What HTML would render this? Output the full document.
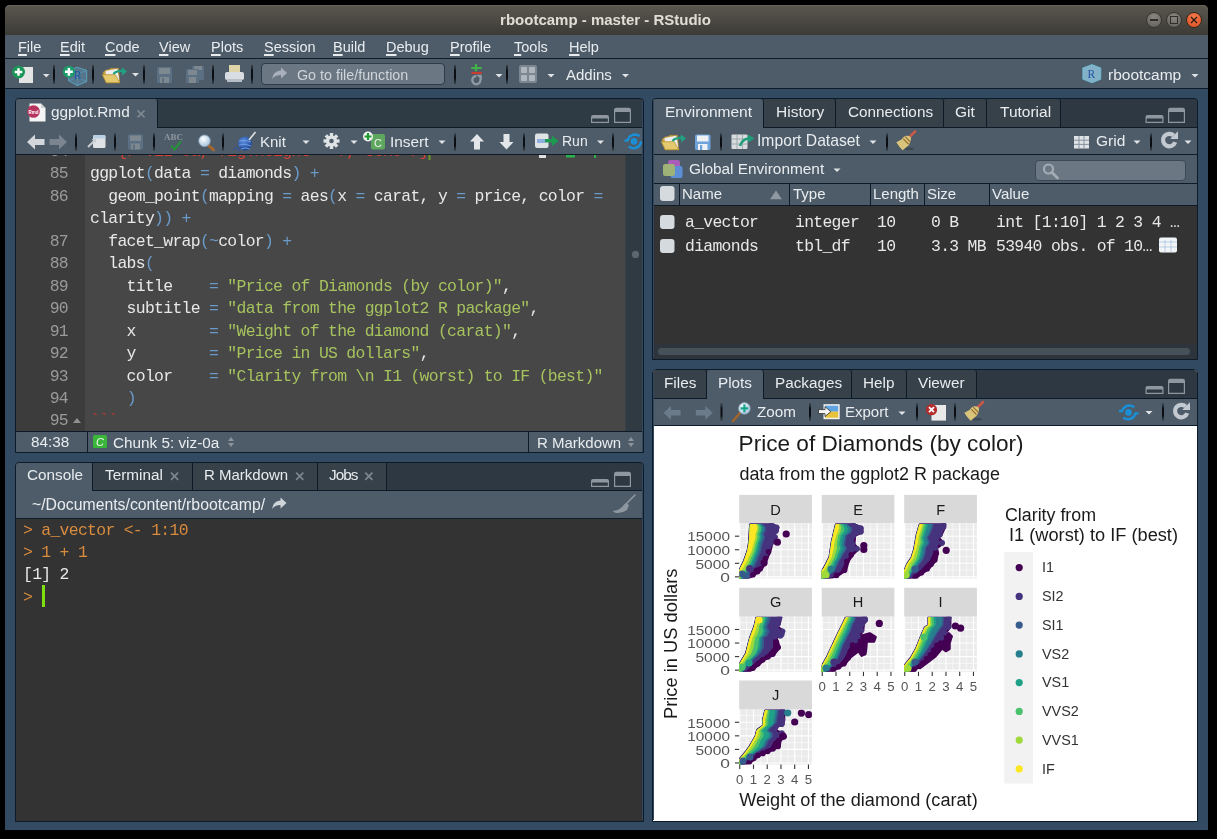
<!DOCTYPE html>
<html><head><meta charset="utf-8">
<style>
*{margin:0;padding:0;box-sizing:border-box}
html,body{width:1217px;height:839px;background:#000;overflow:hidden;font-family:"Liberation Sans",sans-serif;font-size:14px;color:#e4e8ec}
.a{position:absolute}
svg{will-change:transform}
.mono{font-family:"Liberation Mono",monospace}
#win{left:5px;top:5px;width:1203px;height:825px;background:#324b62;border-radius:5px 5px 0 0;overflow:hidden}
#title{left:5px;top:5px;width:1203px;height:30px;border-radius:5px 5px 0 0;box-shadow:inset 0 1px #67655b;background:linear-gradient(#5a574f,#3c3b36)}
#title .t{will-change:transform;left:-1px;top:6px;width:1203px;text-align:center;font-weight:bold;font-size:15px;color:#e0ddd5}
#menu{left:5px;top:35px;width:1203px;height:24px;background:#4e5c69;border-bottom:1px solid #0e1c29}
#menu span{position:absolute;will-change:transform;top:4px;font-size:14.5px;color:#e8ecef}
#menu u{text-decoration:underline;text-decoration-thickness:1.5px;text-underline-offset:2px}
#tool{left:5px;top:59px;width:1203px;height:30px;background:#4e5c69;border-bottom:1px solid #0e1c29}
.pane{position:absolute;border:1px solid #0d1a27;border-radius:4px 4px 0 0;overflow:hidden}
.tabbar{position:absolute;left:0;top:0;right:0;height:29px;background:#2e3a44;border-bottom:1px solid #0d1a27}
.tab{position:absolute;top:0;height:29px;background:#3a4651;border-right:1px solid #0d1a27;border-bottom:1px solid #0d1a27;color:#e6eaee;font-size:14.5px;line-height:28px}
.tab.act{background:#4e5c69;border-bottom:1px solid #4e5c69;border-radius:4px 4px 0 0}
.bar{position:absolute;left:0;right:0;background:#4e5c69;border-bottom:1px solid #0d1a27}
.sep{position:absolute;width:2px;height:19px;background:#151d24;border-radius:1px}
.lbl{position:absolute;font-size:14.5px;color:#e8ecef;white-space:nowrap;margin-top:-1px;will-change:transform}
.code{position:absolute;will-change:transform;font-family:"Liberation Mono",monospace;font-size:16.4px;letter-spacing:-0.68px;white-space:pre;color:#e8e8e8;line-height:22.45px}
.p{color:#6a9ac8}
.s{color:#a6c35e}
.ln{position:absolute;will-change:transform;font-family:"Liberation Mono",monospace;font-size:16.4px;letter-spacing:-0.68px;color:#9a9a9a;line-height:22.45px;text-align:right;white-space:pre}
.cb{position:absolute;width:14px;height:14px;border-radius:3px;background:#d7dce0}
</style></head><body>
<div id="win" class="a"></div>
<div id="title" class="a"><div class="t a">rbootcamp - master - RStudio</div>
  <div class="a" style="left:1141px;top:7px;width:16px;height:16px;border-radius:50%;background:radial-gradient(circle at 50% 30%,#8a8780,#5e5c56);border:1px solid #36352f"></div>
  <div class="a" style="left:1145px;top:14px;width:8px;height:1.5px;background:#2f2e2a"></div>
  <div class="a" style="left:1161px;top:7px;width:16px;height:16px;border-radius:50%;background:radial-gradient(circle at 50% 30%,#8a8780,#5e5c56);border:1px solid #36352f"></div>
  <div class="a" style="left:1165px;top:11px;width:8px;height:8px;border:1.3px solid #2f2e2a"></div>
  <div class="a" style="left:1181px;top:7px;width:16px;height:16px;border-radius:50%;background:radial-gradient(circle at 50% 30%,#f27a4e,#dd4e1f);border:1px solid #3a2a20"></div>
  <svg class="a" style="left:1181px;top:7px" width="16" height="16"><path d="M5 5 L11 11 M11 5 L5 11" stroke="#2a1a10" stroke-width="1.3"/></svg>
</div>
<div id="menu" class="a">
    <span style="left:13px"><u>F</u>ile</span>
    <span style="left:55px"><u>E</u>dit</span>
    <span style="left:100px"><u>C</u>ode</span>
    <span style="left:154px"><u>V</u>iew</span>
    <span style="left:206px"><u>P</u>lots</span>
    <span style="left:259px"><u>S</u>ession</span>
    <span style="left:328px"><u>B</u>uild</span>
    <span style="left:381px"><u>D</u>ebug</span>
    <span style="left:445px"><u>P</u>rofile</span>
    <span style="left:509px"><u>T</u>ools</span>
    <span style="left:564px"><u>H</u>elp</span>
</div>
<div id="tool" class="a"></div>
<!-- TOOLBAR ICONS -->
<div id="tb">
  <svg class="a" style="left:0;top:58px" width="1217" height="31">
    <defs>
      <linearGradient id="sepg" x1="0" y1="0" x2="0" y2="1"><stop offset="0" stop-color="#0b0f13" stop-opacity="0.3"/><stop offset="0.3" stop-color="#0b0f13"/><stop offset="0.7" stop-color="#0b0f13"/><stop offset="1" stop-color="#0b0f13" stop-opacity="0.3"/></linearGradient>
    </defs>
    <!-- new file -->
    <rect x="19" y="9" width="14" height="16" fill="#e4e4e4"/>
    <circle cx="18.5" cy="14" r="6.5" fill="#1a9457"/>
    <path d="M18.5 10.2 V17.8 M14.7 14 H22.3" stroke="#fff" stroke-width="2.4"/>
    <path d="M43 16 h6.5 l-3.25 3.5z" fill="#dfe3e6"/>
    <rect x="53" y="7" width="2" height="19" fill="url(#sepg)"/>
    <!-- new project cube -->
    <path d="M77.3 9.2 L86.7 12.4 L86.7 23.6 L77.3 27.6 L68.6 22.7 L68.6 12.6 Z" fill="#5a88a6" fill-opacity="0.6" stroke="#5cb6d6" stroke-width="0.9" stroke-opacity="0.8"/>
    <path d="M68.6 12.6 L77.3 16 L86.7 12.4 M77.3 16 V27.6 M68.6 22.7 L77.3 19.5 L86.7 23.6" stroke="#5cb6d6" stroke-width="0.7" fill="none" opacity="0.55"/>
    <text x="73.8" y="20.8" font-family="Liberation Serif" font-size="11.5" fill="#2454a0">R</text>
    <circle cx="68.9" cy="13.8" r="6" fill="#1a9e69"/>
    <path d="M68.9 9.9 V17.7 M65 13.8 H72.8" stroke="#fff" stroke-width="2.5"/>
    <rect x="92" y="7" width="2" height="19" fill="url(#sepg)"/>
    <!-- open folder -->
    <path d="M103 14.5 L105.5 12.3 L109.5 11.3 L111 10.3 L118.5 10.3 L119.7 24.7 L106 24.7 Z" fill="#c9a44a" stroke="#b08d35" stroke-width="0.6"/>
    <path d="M105.6 12.9 L117.3 10.8 L119.3 22.5 L106.2 22.7 Z" fill="#ededed"/>
    <path d="M102.3 16.7 L115.2 16.7 L119.8 24.7 L106.3 24.7 Z" fill="#e4c96f" stroke="#b8962e" stroke-width="0.8"/>
    <path d="M113.5 16 Q116 12.6 122.3 12.9" stroke="#22a180" stroke-width="2.4" fill="none"/>
    <path d="M121.8 9.2 L127 13.4 L122.1 17.5 Z" fill="#22a180"/>
    <path d="M132 15 h7 l-3.5 3.5z" fill="#dfe3e6"/>
    <rect x="143" y="7" width="2" height="19" fill="url(#sepg)"/>
    <!-- save disabled -->
    <rect x="157" y="9" width="15" height="16" rx="1.5" fill="#5c7083"/>
    <rect x="159" y="10" width="11" height="6" fill="#7d8891"/>
    <rect x="160" y="19" width="9" height="6" fill="#7d8891"/>
    <rect x="162" y="20" width="2" height="5" fill="#5c7083"/>
    <!-- save all disabled -->
    <rect x="192" y="8" width="12" height="14" rx="1.5" fill="#5c7083"/>
    <rect x="194" y="8" width="8" height="4" fill="#7d8891"/>
    <rect x="186" y="11" width="13" height="14" rx="1.5" fill="#5c7083"/>
    <rect x="188" y="12" width="9" height="5" fill="#7d8891"/>
    <rect x="189" y="19" width="7" height="6" fill="#7d8891"/>
    <rect x="212" y="7" width="2" height="19" fill="url(#sepg)"/>
    <!-- printer -->
    <rect x="229" y="7" width="11" height="9" fill="#e0d5a8"/>
    <rect x="225" y="14" width="19" height="8" rx="2" fill="#d9dde2"/>
    <rect x="227" y="21" width="15" height="3" fill="#b8bec5"/>
    <rect x="251" y="7" width="2" height="19" fill="url(#sepg)"/>
    <!-- goto box -->
    <rect x="261.5" y="5.5" width="183" height="21" rx="3.5" fill="#6b7884" stroke="#2e3a45" stroke-width="1"/>
    <path d="M272 21 Q273 13 281 12.5 V9.5 L287 15 L281 20.5 V17 Q275 17 272 21Z" fill="#a9b0bb"/>
    <rect x="454" y="7" width="2" height="19" fill="url(#sepg)"/>
    <!-- vcs icon -->
    <path d="M476 5.9 V13.2 M471.3 10 H481.8" stroke="#3fb548" stroke-width="2.1"/>
    <rect x="471.5" y="13.9" width="10.3" height="2.1" fill="#cc3b30"/>
    <path d="M476.4 18 A4.1 4.1 0 1 0 480.25 20.7" stroke="#8e99a4" stroke-width="2.4" fill="none"/>
    <path d="M476.2 16.8 L481.8 16.8 L481.8 22.2Z" fill="#8e99a4"/>
    <path d="M495.5 16 h7 l-3.5 3.5z" fill="#dfe3e6"/>
    <rect x="506" y="7" width="2" height="19" fill="url(#sepg)"/>
    <!-- grid panes -->
    <rect x="519" y="7" width="18" height="18" rx="2" fill="#7d8791"/>
    <rect x="521" y="9" width="6" height="6" rx="1" fill="#aeb5bc"/>
    <rect x="529" y="9" width="6" height="6" rx="1" fill="#aeb5bc"/>
    <rect x="521" y="17" width="6" height="6" rx="1" fill="#aeb5bc"/>
    <rect x="529" y="17" width="6" height="6" rx="1" fill="#aeb5bc"/>
    <path d="M547.5 16 h7 l-3.5 3.5z" fill="#dfe3e6"/>
    <path d="M622 16 h7 l-3.5 3.5z" fill="#dfe3e6"/>
    <!-- project cube -->
    <path d="M1092 6.6 L1100.8 10 L1100.8 21.2 L1092 24.8 L1082.8 21.2 L1082.8 10 Z" fill="#8fc0d8" fill-opacity="0.85" stroke="#6fc0dc" stroke-width="0.8"/>
    <path d="M1082.8 10 L1092 13.5 L1100.8 10 M1092 13.5 V24.8 M1082.8 21.2 L1092 17.5 L1100.8 21.2" stroke="#6fb8d4" stroke-width="0.6" fill="none" opacity="0.6"/>
    <text x="1087.5" y="19.8" font-family="Liberation Serif" font-size="11.5" fill="#2454a0">R</text>
    <path d="M1191.5 16 h7 l-3.5 3.5z" fill="#dfe3e6"/>
  </svg>
  <div class="lbl" style="left:297px;top:68px;font-size:14.3px;color:#cfd4d9">Go to file/function</div>
  <div class="lbl" style="left:566px;top:67px;font-size:15px">Addins</div>
  <div class="lbl" style="left:1108px;top:67px;font-size:15.5px">rbootcamp</div>
</div>

<!-- EDITOR PANE -->
<div class="pane" style="left:15px;top:98px;width:629px;height:355px;background:#474747"></div>
<div class="a" style="left:16px;top:99px;width:627px;height:29px;background:#2e3a44;border-bottom:1px solid #0d1a27;border-radius:3px 3px 0 0"></div>
<div class="a" style="left:16px;top:99px;width:142px;height:29px;background:#4e5c69;border-right:1px solid #0d1a27;border-radius:3px 3px 0 0"></div>
<div class="a" style="left:16px;top:128px;width:627px;height:27px;background:#4e5c69;border-bottom:1px solid #0d1a27"></div>
<div class="a" style="left:16px;top:155px;width:69px;height:276px;background:#3c3c3c"></div>
<div class="a" style="left:625px;top:155px;width:18px;height:276px;background:#303a43"></div>
<div class="a" style="left:16px;top:431px;width:627px;height:22px;background:#4e5c69;border-top:1px solid #0d1a27;border-bottom:1px solid #0d1a27"></div>
<div class="a" style="left:87px;top:432px;width:1px;height:20px;background:#0d1a27"></div>
<div class="a" style="left:528px;top:432px;width:1px;height:20px;background:#0d1a27"></div>
<div class="lbl" style="left:51px;top:104px;font-size:15.4px">ggplot.Rmd</div>
<div class="lbl" style="left:260px;top:134px;font-size:15px">Knit</div>
<div class="lbl" style="left:390px;top:134px;font-size:15.4px">Insert</div>
<div class="lbl" style="left:562px;top:134px;font-size:14px">Run</div>
<div class="lbl" style="left:31px;top:434px;font-size:15.3px">84:38</div>
<div class="lbl" style="left:113px;top:435px;font-size:15.3px">Chunk 5: viz-0a</div>
<div class="lbl" style="left:537px;top:435px;font-size:15px">R Markdown</div>
<div id="edcode" class="a" style="left:16px;top:155px;width:609px;height:276px;overflow:hidden">
<div class="ln" style="left:0;top:-14px;width:52px">84
85
86

87
88
89
90
91
92
93
94
95</div>
<div class="code" style="left:74px;top:-14px"><span style="color:#d8423a">```{r viz-0a, fig.height = 7, echo=F}</span>
ggplot<span class="p">(</span>data <span class="p">=</span> diamonds<span class="p">)</span> <span class="p">+</span>
  geom_point<span class="p">(</span>mapping <span class="p">=</span> aes<span class="p">(</span>x <span class="p">=</span> carat, y <span class="p">=</span> price, color <span class="p">=</span>
clarity<span class="p">))</span> <span class="p">+</span>
  facet_wrap<span class="p">(~</span>color<span class="p">)</span> <span class="p">+</span>
  labs<span class="p">(</span>
    title    <span class="p">=</span> <span class="s">"Price of Diamonds (by color)"</span>,
    subtitle <span class="p">=</span> <span class="s">"data from the ggplot2 R package"</span>,
    x        <span class="p">=</span> <span class="s">"Weight of the diamond (carat)"</span>,
    y        <span class="p">=</span> <span class="s">"Price in US dollars"</span>,
    color    <span class="p">=</span> <span class="s">"Clarity from \n I1 (worst) to IF (best)"</span>
    <span class="p">)</span>
<span style="color:#c8372d">```</span></div>
</div>
<!-- CONSOLE PANE -->
<div class="pane" style="left:15px;top:462px;width:629px;height:360px;background:#333"></div>
<div class="a" style="left:16px;top:463px;width:627px;height:28px;background:#2d3843;border-bottom:1px solid #0d1a27;border-radius:3px 3px 0 0"></div>
<div class="a" style="left:93px;top:463px;width:100px;height:27px;background:#37414a;border-right:1px solid #0d1a27"></div>
<div class="a" style="left:193px;top:463px;width:125px;height:27px;background:#37414a;border-right:1px solid #0d1a27"></div>
<div class="a" style="left:318px;top:463px;width:69px;height:27px;background:#37414a;border-right:1px solid #0d1a27"></div>
<div class="a" style="left:16px;top:463px;width:77px;height:28px;background:#4e5c69;border-right:1px solid #0d1a27;border-radius:3px 0 0 0"></div>
<div class="a" style="left:16px;top:491px;width:627px;height:28px;background:#4e5c69;border-bottom:1px solid #0d1a27"></div>
<div class="lbl" style="left:27px;top:467px;font-size:15.3px">Console</div>
<div class="lbl" style="left:105px;top:467px;font-size:15.3px">Terminal</div>
<div class="lbl" style="left:204px;top:467px;font-size:15px">R Markdown</div>
<div class="lbl" style="left:329px;top:467px;font-size:15.3px;letter-spacing:-1px">Jobs</div>
<div class="lbl" style="left:32px;top:497px;font-size:15.8px">~/Documents/content/rbootcamp/</div>
<div class="code" style="left:23px;top:520px;line-height:22.2px"><span style="color:#d98b3e">&gt; a_vector &lt;- 1:10
&gt; 1 + 1</span>
[1] 2
<span style="color:#d98b3e">&gt; </span></div>
<div class="a" style="left:42px;top:585px;width:3px;height:22px;background:#7ce00c"></div>
<!-- ENV PANE -->
<div class="pane" style="left:652px;top:98px;width:546px;height:262px;background:#333"></div>
<div class="a" style="left:653px;top:99px;width:544px;height:29px;background:#2d3843;border-bottom:1px solid #0d1a27;border-radius:3px 3px 0 0"></div>
<div class="a" style="left:763px;top:99px;width:73px;height:28px;background:#37414a;border-right:1px solid #0d1a27;border-radius:3px 3px 0 0"></div>
<div class="a" style="left:836px;top:99px;width:108px;height:28px;background:#37414a;border-right:1px solid #0d1a27;border-radius:3px 3px 0 0"></div>
<div class="a" style="left:944px;top:99px;width:43px;height:28px;background:#37414a;border-right:1px solid #0d1a27;border-radius:3px 3px 0 0"></div>
<div class="a" style="left:987px;top:99px;width:74px;height:28px;background:#37414a;border-right:1px solid #0d1a27;border-radius:3px 3px 0 0"></div>
<div class="a" style="left:653px;top:99px;width:111px;height:29px;background:#4e5c69;border-right:1px solid #0d1a27;border-radius:3px 3px 0 0"></div>
<div class="a" style="left:653px;top:128px;width:544px;height:27px;background:#4e5c69;border-bottom:1px solid #0d1a27"></div>
<div class="a" style="left:653px;top:155px;width:544px;height:29px;background:#4e5c69;border-bottom:1px solid #0d1a27"></div>
<div class="a" style="left:653px;top:184px;width:544px;height:22px;background:#4e5c69;border-bottom:1px solid #0d1a27"></div>
<div class="a" style="left:679px;top:184px;width:1px;height:21px;background:#0d1a27"></div>
<div class="a" style="left:789px;top:184px;width:1px;height:21px;background:#0d1a27"></div>
<div class="a" style="left:870px;top:184px;width:1px;height:21px;background:#0d1a27"></div>
<div class="a" style="left:924px;top:184px;width:1px;height:21px;background:#0d1a27"></div>
<div class="a" style="left:989px;top:184px;width:1px;height:21px;background:#0d1a27"></div>
<div class="a" style="left:1035px;top:159.5px;width:151px;height:21px;background:#6b7884;border:1px solid #3c4853;border-radius:4px"></div>
<div class="a" style="left:653px;top:344px;width:544px;height:15px;background:#2d343b"></div>
<div class="a" style="left:658px;top:348px;width:532px;height:7px;background:#47515a;border-radius:4px"></div>
<div class="lbl" style="left:665px;top:104px;font-size:15.5px">Environment</div>
<div class="lbl" style="left:776px;top:104px;font-size:15.5px">History</div>
<div class="lbl" style="left:848px;top:104px;font-size:15.3px">Connections</div>
<div class="lbl" style="left:955px;top:104px;font-size:15.5px">Git</div>
<div class="lbl" style="left:1000px;top:104px;font-size:15.5px">Tutorial</div>
<div class="lbl" style="left:757px;top:133px;font-size:15.7px">Import Dataset</div>
<div class="lbl" style="left:1096px;top:133px;font-size:15.5px">Grid</div>
<div class="lbl" style="left:689px;top:161px;font-size:15.4px">Global Environment</div>
<div class="lbl" style="left:682px;top:186px;font-size:15px">Name</div>
<div class="lbl" style="left:793px;top:186px;font-size:15px">Type</div>
<div class="lbl" style="left:873px;top:186px;font-size:15px">Length</div>
<div class="lbl" style="left:927px;top:186px;font-size:15px">Size</div>
<div class="lbl" style="left:992px;top:186px;font-size:15px">Value</div>
<div class="code" style="left:685px;top:211px;line-height:24.3px">a_vector
diamonds</div>
<div class="code" style="left:795px;top:211px;line-height:24.3px">integer
tbl_df</div>
<div class="code" style="left:877px;top:211px;line-height:24.3px">10
10</div>
<div class="code" style="left:931px;top:211px;line-height:24.3px">0 B
3.3 MB</div>
<div class="code" style="left:996px;top:211px;line-height:24.3px">int [1:10] 1 2 3 4 …
53940 obs. of 10…</div>
<!-- PLOTS PANE -->
<div class="pane" style="left:652px;top:369px;width:546px;height:453px;background:#fff"></div>
<div class="a" style="left:653px;top:370px;width:544px;height:29px;background:#2d3843;border-bottom:1px solid #0d1a27;border-radius:3px 3px 0 0"></div>
<div class="a" style="left:653px;top:370px;width:54px;height:28px;background:#37414a;border-right:1px solid #0d1a27;border-radius:3px 3px 0 0"></div>
<div class="a" style="left:763px;top:370px;width:89px;height:28px;background:#37414a;border-right:1px solid #0d1a27;border-radius:3px 3px 0 0"></div>
<div class="a" style="left:852px;top:370px;width:55px;height:28px;background:#37414a;border-right:1px solid #0d1a27;border-radius:3px 3px 0 0"></div>
<div class="a" style="left:907px;top:370px;width:70px;height:28px;background:#37414a;border-right:1px solid #0d1a27;border-radius:3px 3px 0 0"></div>
<div class="a" style="left:707px;top:370px;width:57px;height:30px;background:#4e5c69;border-right:1px solid #0d1a27;border-radius:3px 3px 0 0"></div>
<div class="a" style="left:653px;top:399px;width:544px;height:27px;background:#4e5c69;border-bottom:1px solid #0d1a27"></div>
<div class="lbl" style="left:664px;top:375px;font-size:15.3px">Files</div>
<div class="lbl" style="left:718px;top:375px;font-size:15.3px">Plots</div>
<div class="lbl" style="left:775px;top:375px;font-size:15.3px">Packages</div>
<div class="lbl" style="left:863px;top:375px;font-size:15.3px">Help</div>
<div class="lbl" style="left:918px;top:375px;font-size:15.3px">Viewer</div>
<div class="lbl" style="left:757px;top:404px;font-size:15.2px">Zoom</div>
<div class="lbl" style="left:845px;top:404px;font-size:15px">Export</div>
<!-- PLOT SVG START -->
<svg class="a" style="left:0;top:0" width="1217" height="839">
<g font-family="Liberation Sans">
<text x="738.6" y="450.8" font-size="22.3" fill="#1a1a1a" textLength="285" lengthAdjust="spacingAndGlyphs">Price of Diamonds (by color)</text>
<text x="739.4" y="480.2" font-size="18" fill="#1a1a1a" textLength="260.5" lengthAdjust="spacingAndGlyphs">data from the ggplot2 R package</text>
<text x="739.2" y="805.5" font-size="18" fill="#1a1a1a" textLength="238.5" lengthAdjust="spacingAndGlyphs">Weight of the diamond (carat)</text>
<text transform="translate(677.3,719) rotate(-90)" font-size="18" fill="#1a1a1a" textLength="150.5" lengthAdjust="spacingAndGlyphs">Price in US dollars</text>
<text x="1005" y="520.9" font-size="18" fill="#1a1a1a" textLength="91" lengthAdjust="spacingAndGlyphs">Clarity from</text>
<text x="1009" y="540.9" font-size="18" fill="#1a1a1a" textLength="169" lengthAdjust="spacingAndGlyphs">I1 (worst) to IF (best)</text>
</g>
<rect x="1004.2" y="552" width="28.8" height="231.5" fill="#f2f2f2"/>
<circle cx="1019.2" cy="567.6" r="3.6" fill="#440154"/>
<text x="1042" y="572.2" font-family="Liberation Sans" font-size="14.4" fill="#333">I1</text>
<circle cx="1019.2" cy="596.4" r="3.6" fill="#46337E"/>
<text x="1042" y="601.0" font-family="Liberation Sans" font-size="14.4" fill="#333">SI2</text>
<circle cx="1019.2" cy="625.1" r="3.6" fill="#365C8D"/>
<text x="1042" y="629.7" font-family="Liberation Sans" font-size="14.4" fill="#333">SI1</text>
<circle cx="1019.2" cy="653.9" r="3.6" fill="#277F8E"/>
<text x="1042" y="658.5" font-family="Liberation Sans" font-size="14.4" fill="#333">VS2</text>
<circle cx="1019.2" cy="682.6" r="3.6" fill="#1FA187"/>
<text x="1042" y="687.2" font-family="Liberation Sans" font-size="14.4" fill="#333">VS1</text>
<circle cx="1019.2" cy="711.4" r="3.6" fill="#4AC16D"/>
<text x="1042" y="716.0" font-family="Liberation Sans" font-size="14.4" fill="#333">VVS2</text>
<circle cx="1019.2" cy="740.1" r="3.6" fill="#9FDA3A"/>
<text x="1042" y="744.7" font-family="Liberation Sans" font-size="14.4" fill="#333">VVS1</text>
<circle cx="1019.2" cy="768.9" r="3.6" fill="#FDE725"/>
<text x="1042" y="773.5" font-family="Liberation Sans" font-size="14.4" fill="#333">IF</text>
<rect x="739.2" y="494.9" width="72.7" height="28.4" fill="#d9d9d9"/>
<text x="775.6" y="514.5" text-anchor="middle" font-family="Liberation Sans" font-size="14.6" fill="#1a1a1a">D</text>
<rect x="739.2" y="523.3" width="72.7" height="55.2" fill="#ebebeb"/>
<line x1="739.75" y1="523.3" x2="739.75" y2="578.5" stroke="#fff" stroke-width="1.1"/>
<line x1="746.62" y1="523.3" x2="746.62" y2="578.5" stroke="#fff" stroke-width="0.55"/>
<line x1="753.49" y1="523.3" x2="753.49" y2="578.5" stroke="#fff" stroke-width="1.1"/>
<line x1="760.36" y1="523.3" x2="760.36" y2="578.5" stroke="#fff" stroke-width="0.55"/>
<line x1="767.23" y1="523.3" x2="767.23" y2="578.5" stroke="#fff" stroke-width="1.1"/>
<line x1="774.10" y1="523.3" x2="774.10" y2="578.5" stroke="#fff" stroke-width="0.55"/>
<line x1="780.97" y1="523.3" x2="780.97" y2="578.5" stroke="#fff" stroke-width="1.1"/>
<line x1="787.84" y1="523.3" x2="787.84" y2="578.5" stroke="#fff" stroke-width="0.55"/>
<line x1="794.71" y1="523.3" x2="794.71" y2="578.5" stroke="#fff" stroke-width="1.1"/>
<line x1="801.58" y1="523.3" x2="801.58" y2="578.5" stroke="#fff" stroke-width="0.55"/>
<line x1="808.45" y1="523.3" x2="808.45" y2="578.5" stroke="#fff" stroke-width="1.1"/>
<line x1="739.2" y1="576.87" x2="811.9000000000001" y2="576.87" stroke="#fff" stroke-width="1.1"/>
<line x1="739.2" y1="570.09" x2="811.9000000000001" y2="570.09" stroke="#fff" stroke-width="0.55"/>
<line x1="739.2" y1="563.31" x2="811.9000000000001" y2="563.31" stroke="#fff" stroke-width="1.1"/>
<line x1="739.2" y1="556.53" x2="811.9000000000001" y2="556.53" stroke="#fff" stroke-width="0.55"/>
<line x1="739.2" y1="549.74" x2="811.9000000000001" y2="549.74" stroke="#fff" stroke-width="1.1"/>
<line x1="739.2" y1="542.96" x2="811.9000000000001" y2="542.96" stroke="#fff" stroke-width="0.55"/>
<line x1="739.2" y1="536.18" x2="811.9000000000001" y2="536.18" stroke="#fff" stroke-width="1.1"/>
<line x1="739.2" y1="529.40" x2="811.9000000000001" y2="529.40" stroke="#fff" stroke-width="0.55"/>
<line x1="734.9" y1="576.87" x2="739.2" y2="576.87" stroke="#333" stroke-width="1.1"/>
<text x="730.0" y="582.1" text-anchor="end" font-family="Liberation Sans" font-size="12.8" fill="#555" textLength="9.7" lengthAdjust="spacingAndGlyphs">0</text>
<line x1="734.9" y1="563.31" x2="739.2" y2="563.31" stroke="#333" stroke-width="1.1"/>
<text x="730.0" y="568.5" text-anchor="end" font-family="Liberation Sans" font-size="12.8" fill="#555" textLength="34.5" lengthAdjust="spacingAndGlyphs">5000</text>
<line x1="734.9" y1="549.74" x2="739.2" y2="549.74" stroke="#333" stroke-width="1.1"/>
<text x="730.0" y="554.9" text-anchor="end" font-family="Liberation Sans" font-size="12.8" fill="#555" textLength="42.7" lengthAdjust="spacingAndGlyphs">10000</text>
<line x1="734.9" y1="536.18" x2="739.2" y2="536.18" stroke="#333" stroke-width="1.1"/>
<text x="730.0" y="541.4" text-anchor="end" font-family="Liberation Sans" font-size="12.8" fill="#555" textLength="42.7" lengthAdjust="spacingAndGlyphs">15000</text>
<rect x="821.7" y="494.9" width="72.7" height="28.4" fill="#d9d9d9"/>
<text x="858.1" y="514.5" text-anchor="middle" font-family="Liberation Sans" font-size="14.6" fill="#1a1a1a">E</text>
<rect x="821.7" y="523.3" width="72.7" height="55.2" fill="#ebebeb"/>
<line x1="822.25" y1="523.3" x2="822.25" y2="578.5" stroke="#fff" stroke-width="1.1"/>
<line x1="829.12" y1="523.3" x2="829.12" y2="578.5" stroke="#fff" stroke-width="0.55"/>
<line x1="835.99" y1="523.3" x2="835.99" y2="578.5" stroke="#fff" stroke-width="1.1"/>
<line x1="842.86" y1="523.3" x2="842.86" y2="578.5" stroke="#fff" stroke-width="0.55"/>
<line x1="849.73" y1="523.3" x2="849.73" y2="578.5" stroke="#fff" stroke-width="1.1"/>
<line x1="856.60" y1="523.3" x2="856.60" y2="578.5" stroke="#fff" stroke-width="0.55"/>
<line x1="863.47" y1="523.3" x2="863.47" y2="578.5" stroke="#fff" stroke-width="1.1"/>
<line x1="870.34" y1="523.3" x2="870.34" y2="578.5" stroke="#fff" stroke-width="0.55"/>
<line x1="877.21" y1="523.3" x2="877.21" y2="578.5" stroke="#fff" stroke-width="1.1"/>
<line x1="884.08" y1="523.3" x2="884.08" y2="578.5" stroke="#fff" stroke-width="0.55"/>
<line x1="890.95" y1="523.3" x2="890.95" y2="578.5" stroke="#fff" stroke-width="1.1"/>
<line x1="821.7" y1="576.87" x2="894.4000000000001" y2="576.87" stroke="#fff" stroke-width="1.1"/>
<line x1="821.7" y1="570.09" x2="894.4000000000001" y2="570.09" stroke="#fff" stroke-width="0.55"/>
<line x1="821.7" y1="563.31" x2="894.4000000000001" y2="563.31" stroke="#fff" stroke-width="1.1"/>
<line x1="821.7" y1="556.53" x2="894.4000000000001" y2="556.53" stroke="#fff" stroke-width="0.55"/>
<line x1="821.7" y1="549.74" x2="894.4000000000001" y2="549.74" stroke="#fff" stroke-width="1.1"/>
<line x1="821.7" y1="542.96" x2="894.4000000000001" y2="542.96" stroke="#fff" stroke-width="0.55"/>
<line x1="821.7" y1="536.18" x2="894.4000000000001" y2="536.18" stroke="#fff" stroke-width="1.1"/>
<line x1="821.7" y1="529.40" x2="894.4000000000001" y2="529.40" stroke="#fff" stroke-width="0.55"/>
<rect x="904.2" y="494.9" width="72.7" height="28.4" fill="#d9d9d9"/>
<text x="940.6" y="514.5" text-anchor="middle" font-family="Liberation Sans" font-size="14.6" fill="#1a1a1a">F</text>
<rect x="904.2" y="523.3" width="72.7" height="55.2" fill="#ebebeb"/>
<line x1="904.75" y1="523.3" x2="904.75" y2="578.5" stroke="#fff" stroke-width="1.1"/>
<line x1="911.62" y1="523.3" x2="911.62" y2="578.5" stroke="#fff" stroke-width="0.55"/>
<line x1="918.49" y1="523.3" x2="918.49" y2="578.5" stroke="#fff" stroke-width="1.1"/>
<line x1="925.36" y1="523.3" x2="925.36" y2="578.5" stroke="#fff" stroke-width="0.55"/>
<line x1="932.23" y1="523.3" x2="932.23" y2="578.5" stroke="#fff" stroke-width="1.1"/>
<line x1="939.10" y1="523.3" x2="939.10" y2="578.5" stroke="#fff" stroke-width="0.55"/>
<line x1="945.97" y1="523.3" x2="945.97" y2="578.5" stroke="#fff" stroke-width="1.1"/>
<line x1="952.84" y1="523.3" x2="952.84" y2="578.5" stroke="#fff" stroke-width="0.55"/>
<line x1="959.71" y1="523.3" x2="959.71" y2="578.5" stroke="#fff" stroke-width="1.1"/>
<line x1="966.58" y1="523.3" x2="966.58" y2="578.5" stroke="#fff" stroke-width="0.55"/>
<line x1="973.45" y1="523.3" x2="973.45" y2="578.5" stroke="#fff" stroke-width="1.1"/>
<line x1="904.2" y1="576.87" x2="976.9000000000001" y2="576.87" stroke="#fff" stroke-width="1.1"/>
<line x1="904.2" y1="570.09" x2="976.9000000000001" y2="570.09" stroke="#fff" stroke-width="0.55"/>
<line x1="904.2" y1="563.31" x2="976.9000000000001" y2="563.31" stroke="#fff" stroke-width="1.1"/>
<line x1="904.2" y1="556.53" x2="976.9000000000001" y2="556.53" stroke="#fff" stroke-width="0.55"/>
<line x1="904.2" y1="549.74" x2="976.9000000000001" y2="549.74" stroke="#fff" stroke-width="1.1"/>
<line x1="904.2" y1="542.96" x2="976.9000000000001" y2="542.96" stroke="#fff" stroke-width="0.55"/>
<line x1="904.2" y1="536.18" x2="976.9000000000001" y2="536.18" stroke="#fff" stroke-width="1.1"/>
<line x1="904.2" y1="529.40" x2="976.9000000000001" y2="529.40" stroke="#fff" stroke-width="0.55"/>
<rect x="739.2" y="587.7" width="72.7" height="29.0" fill="#d9d9d9"/>
<text x="775.6" y="607.3" text-anchor="middle" font-family="Liberation Sans" font-size="14.6" fill="#1a1a1a">G</text>
<rect x="739.2" y="616.7" width="72.7" height="55.1" fill="#ebebeb"/>
<line x1="739.75" y1="616.7" x2="739.75" y2="671.8" stroke="#fff" stroke-width="1.1"/>
<line x1="746.62" y1="616.7" x2="746.62" y2="671.8" stroke="#fff" stroke-width="0.55"/>
<line x1="753.49" y1="616.7" x2="753.49" y2="671.8" stroke="#fff" stroke-width="1.1"/>
<line x1="760.36" y1="616.7" x2="760.36" y2="671.8" stroke="#fff" stroke-width="0.55"/>
<line x1="767.23" y1="616.7" x2="767.23" y2="671.8" stroke="#fff" stroke-width="1.1"/>
<line x1="774.10" y1="616.7" x2="774.10" y2="671.8" stroke="#fff" stroke-width="0.55"/>
<line x1="780.97" y1="616.7" x2="780.97" y2="671.8" stroke="#fff" stroke-width="1.1"/>
<line x1="787.84" y1="616.7" x2="787.84" y2="671.8" stroke="#fff" stroke-width="0.55"/>
<line x1="794.71" y1="616.7" x2="794.71" y2="671.8" stroke="#fff" stroke-width="1.1"/>
<line x1="801.58" y1="616.7" x2="801.58" y2="671.8" stroke="#fff" stroke-width="0.55"/>
<line x1="808.45" y1="616.7" x2="808.45" y2="671.8" stroke="#fff" stroke-width="1.1"/>
<line x1="739.2" y1="670.17" x2="811.9000000000001" y2="670.17" stroke="#fff" stroke-width="1.1"/>
<line x1="739.2" y1="663.39" x2="811.9000000000001" y2="663.39" stroke="#fff" stroke-width="0.55"/>
<line x1="739.2" y1="656.61" x2="811.9000000000001" y2="656.61" stroke="#fff" stroke-width="1.1"/>
<line x1="739.2" y1="649.83" x2="811.9000000000001" y2="649.83" stroke="#fff" stroke-width="0.55"/>
<line x1="739.2" y1="643.04" x2="811.9000000000001" y2="643.04" stroke="#fff" stroke-width="1.1"/>
<line x1="739.2" y1="636.26" x2="811.9000000000001" y2="636.26" stroke="#fff" stroke-width="0.55"/>
<line x1="739.2" y1="629.48" x2="811.9000000000001" y2="629.48" stroke="#fff" stroke-width="1.1"/>
<line x1="739.2" y1="622.70" x2="811.9000000000001" y2="622.70" stroke="#fff" stroke-width="0.55"/>
<line x1="734.9" y1="670.17" x2="739.2" y2="670.17" stroke="#333" stroke-width="1.1"/>
<text x="730.0" y="675.4" text-anchor="end" font-family="Liberation Sans" font-size="12.8" fill="#555" textLength="9.7" lengthAdjust="spacingAndGlyphs">0</text>
<line x1="734.9" y1="656.61" x2="739.2" y2="656.61" stroke="#333" stroke-width="1.1"/>
<text x="730.0" y="661.8" text-anchor="end" font-family="Liberation Sans" font-size="12.8" fill="#555" textLength="34.5" lengthAdjust="spacingAndGlyphs">5000</text>
<line x1="734.9" y1="643.04" x2="739.2" y2="643.04" stroke="#333" stroke-width="1.1"/>
<text x="730.0" y="648.2" text-anchor="end" font-family="Liberation Sans" font-size="12.8" fill="#555" textLength="42.7" lengthAdjust="spacingAndGlyphs">10000</text>
<line x1="734.9" y1="629.48" x2="739.2" y2="629.48" stroke="#333" stroke-width="1.1"/>
<text x="730.0" y="634.7" text-anchor="end" font-family="Liberation Sans" font-size="12.8" fill="#555" textLength="42.7" lengthAdjust="spacingAndGlyphs">15000</text>
<rect x="821.7" y="587.7" width="72.7" height="29.0" fill="#d9d9d9"/>
<text x="858.1" y="607.3" text-anchor="middle" font-family="Liberation Sans" font-size="14.6" fill="#1a1a1a">H</text>
<rect x="821.7" y="616.7" width="72.7" height="55.1" fill="#ebebeb"/>
<line x1="822.25" y1="616.7" x2="822.25" y2="671.8" stroke="#fff" stroke-width="1.1"/>
<line x1="829.12" y1="616.7" x2="829.12" y2="671.8" stroke="#fff" stroke-width="0.55"/>
<line x1="835.99" y1="616.7" x2="835.99" y2="671.8" stroke="#fff" stroke-width="1.1"/>
<line x1="842.86" y1="616.7" x2="842.86" y2="671.8" stroke="#fff" stroke-width="0.55"/>
<line x1="849.73" y1="616.7" x2="849.73" y2="671.8" stroke="#fff" stroke-width="1.1"/>
<line x1="856.60" y1="616.7" x2="856.60" y2="671.8" stroke="#fff" stroke-width="0.55"/>
<line x1="863.47" y1="616.7" x2="863.47" y2="671.8" stroke="#fff" stroke-width="1.1"/>
<line x1="870.34" y1="616.7" x2="870.34" y2="671.8" stroke="#fff" stroke-width="0.55"/>
<line x1="877.21" y1="616.7" x2="877.21" y2="671.8" stroke="#fff" stroke-width="1.1"/>
<line x1="884.08" y1="616.7" x2="884.08" y2="671.8" stroke="#fff" stroke-width="0.55"/>
<line x1="890.95" y1="616.7" x2="890.95" y2="671.8" stroke="#fff" stroke-width="1.1"/>
<line x1="821.7" y1="670.17" x2="894.4000000000001" y2="670.17" stroke="#fff" stroke-width="1.1"/>
<line x1="821.7" y1="663.39" x2="894.4000000000001" y2="663.39" stroke="#fff" stroke-width="0.55"/>
<line x1="821.7" y1="656.61" x2="894.4000000000001" y2="656.61" stroke="#fff" stroke-width="1.1"/>
<line x1="821.7" y1="649.83" x2="894.4000000000001" y2="649.83" stroke="#fff" stroke-width="0.55"/>
<line x1="821.7" y1="643.04" x2="894.4000000000001" y2="643.04" stroke="#fff" stroke-width="1.1"/>
<line x1="821.7" y1="636.26" x2="894.4000000000001" y2="636.26" stroke="#fff" stroke-width="0.55"/>
<line x1="821.7" y1="629.48" x2="894.4000000000001" y2="629.48" stroke="#fff" stroke-width="1.1"/>
<line x1="821.7" y1="622.70" x2="894.4000000000001" y2="622.70" stroke="#fff" stroke-width="0.55"/>
<rect x="904.2" y="587.7" width="72.7" height="29.0" fill="#d9d9d9"/>
<text x="940.6" y="607.3" text-anchor="middle" font-family="Liberation Sans" font-size="14.6" fill="#1a1a1a">I</text>
<rect x="904.2" y="616.7" width="72.7" height="55.1" fill="#ebebeb"/>
<line x1="904.75" y1="616.7" x2="904.75" y2="671.8" stroke="#fff" stroke-width="1.1"/>
<line x1="911.62" y1="616.7" x2="911.62" y2="671.8" stroke="#fff" stroke-width="0.55"/>
<line x1="918.49" y1="616.7" x2="918.49" y2="671.8" stroke="#fff" stroke-width="1.1"/>
<line x1="925.36" y1="616.7" x2="925.36" y2="671.8" stroke="#fff" stroke-width="0.55"/>
<line x1="932.23" y1="616.7" x2="932.23" y2="671.8" stroke="#fff" stroke-width="1.1"/>
<line x1="939.10" y1="616.7" x2="939.10" y2="671.8" stroke="#fff" stroke-width="0.55"/>
<line x1="945.97" y1="616.7" x2="945.97" y2="671.8" stroke="#fff" stroke-width="1.1"/>
<line x1="952.84" y1="616.7" x2="952.84" y2="671.8" stroke="#fff" stroke-width="0.55"/>
<line x1="959.71" y1="616.7" x2="959.71" y2="671.8" stroke="#fff" stroke-width="1.1"/>
<line x1="966.58" y1="616.7" x2="966.58" y2="671.8" stroke="#fff" stroke-width="0.55"/>
<line x1="973.45" y1="616.7" x2="973.45" y2="671.8" stroke="#fff" stroke-width="1.1"/>
<line x1="904.2" y1="670.17" x2="976.9000000000001" y2="670.17" stroke="#fff" stroke-width="1.1"/>
<line x1="904.2" y1="663.39" x2="976.9000000000001" y2="663.39" stroke="#fff" stroke-width="0.55"/>
<line x1="904.2" y1="656.61" x2="976.9000000000001" y2="656.61" stroke="#fff" stroke-width="1.1"/>
<line x1="904.2" y1="649.83" x2="976.9000000000001" y2="649.83" stroke="#fff" stroke-width="0.55"/>
<line x1="904.2" y1="643.04" x2="976.9000000000001" y2="643.04" stroke="#fff" stroke-width="1.1"/>
<line x1="904.2" y1="636.26" x2="976.9000000000001" y2="636.26" stroke="#fff" stroke-width="0.55"/>
<line x1="904.2" y1="629.48" x2="976.9000000000001" y2="629.48" stroke="#fff" stroke-width="1.1"/>
<line x1="904.2" y1="622.70" x2="976.9000000000001" y2="622.70" stroke="#fff" stroke-width="0.55"/>
<rect x="739.2" y="680.5" width="72.7" height="29.1" fill="#d9d9d9"/>
<text x="775.6" y="700.1" text-anchor="middle" font-family="Liberation Sans" font-size="14.6" fill="#1a1a1a">J</text>
<rect x="739.2" y="709.6" width="72.7" height="55.0" fill="#ebebeb"/>
<line x1="739.75" y1="709.6" x2="739.75" y2="764.6" stroke="#fff" stroke-width="1.1"/>
<line x1="746.62" y1="709.6" x2="746.62" y2="764.6" stroke="#fff" stroke-width="0.55"/>
<line x1="753.49" y1="709.6" x2="753.49" y2="764.6" stroke="#fff" stroke-width="1.1"/>
<line x1="760.36" y1="709.6" x2="760.36" y2="764.6" stroke="#fff" stroke-width="0.55"/>
<line x1="767.23" y1="709.6" x2="767.23" y2="764.6" stroke="#fff" stroke-width="1.1"/>
<line x1="774.10" y1="709.6" x2="774.10" y2="764.6" stroke="#fff" stroke-width="0.55"/>
<line x1="780.97" y1="709.6" x2="780.97" y2="764.6" stroke="#fff" stroke-width="1.1"/>
<line x1="787.84" y1="709.6" x2="787.84" y2="764.6" stroke="#fff" stroke-width="0.55"/>
<line x1="794.71" y1="709.6" x2="794.71" y2="764.6" stroke="#fff" stroke-width="1.1"/>
<line x1="801.58" y1="709.6" x2="801.58" y2="764.6" stroke="#fff" stroke-width="0.55"/>
<line x1="808.45" y1="709.6" x2="808.45" y2="764.6" stroke="#fff" stroke-width="1.1"/>
<line x1="739.2" y1="762.97" x2="811.9000000000001" y2="762.97" stroke="#fff" stroke-width="1.1"/>
<line x1="739.2" y1="756.19" x2="811.9000000000001" y2="756.19" stroke="#fff" stroke-width="0.55"/>
<line x1="739.2" y1="749.41" x2="811.9000000000001" y2="749.41" stroke="#fff" stroke-width="1.1"/>
<line x1="739.2" y1="742.63" x2="811.9000000000001" y2="742.63" stroke="#fff" stroke-width="0.55"/>
<line x1="739.2" y1="735.84" x2="811.9000000000001" y2="735.84" stroke="#fff" stroke-width="1.1"/>
<line x1="739.2" y1="729.06" x2="811.9000000000001" y2="729.06" stroke="#fff" stroke-width="0.55"/>
<line x1="739.2" y1="722.28" x2="811.9000000000001" y2="722.28" stroke="#fff" stroke-width="1.1"/>
<line x1="739.2" y1="715.50" x2="811.9000000000001" y2="715.50" stroke="#fff" stroke-width="0.55"/>
<line x1="734.9" y1="762.97" x2="739.2" y2="762.97" stroke="#333" stroke-width="1.1"/>
<text x="730.0" y="768.2" text-anchor="end" font-family="Liberation Sans" font-size="12.8" fill="#555" textLength="9.7" lengthAdjust="spacingAndGlyphs">0</text>
<line x1="734.9" y1="749.41" x2="739.2" y2="749.41" stroke="#333" stroke-width="1.1"/>
<text x="730.0" y="754.6" text-anchor="end" font-family="Liberation Sans" font-size="12.8" fill="#555" textLength="34.5" lengthAdjust="spacingAndGlyphs">5000</text>
<line x1="734.9" y1="735.84" x2="739.2" y2="735.84" stroke="#333" stroke-width="1.1"/>
<text x="730.0" y="741.0" text-anchor="end" font-family="Liberation Sans" font-size="12.8" fill="#555" textLength="42.7" lengthAdjust="spacingAndGlyphs">10000</text>
<line x1="734.9" y1="722.28" x2="739.2" y2="722.28" stroke="#333" stroke-width="1.1"/>
<text x="730.0" y="727.5" text-anchor="end" font-family="Liberation Sans" font-size="12.8" fill="#555" textLength="42.7" lengthAdjust="spacingAndGlyphs">15000</text>
<line x1="822.25" y1="671.8" x2="822.25" y2="676.1" stroke="#333" stroke-width="1.1"/>
<text x="822.25" y="691.0" text-anchor="middle" font-family="Liberation Sans" font-size="13.2" fill="#555">0</text>
<line x1="835.99" y1="671.8" x2="835.99" y2="676.1" stroke="#333" stroke-width="1.1"/>
<text x="835.99" y="691.0" text-anchor="middle" font-family="Liberation Sans" font-size="13.2" fill="#555">1</text>
<line x1="849.73" y1="671.8" x2="849.73" y2="676.1" stroke="#333" stroke-width="1.1"/>
<text x="849.73" y="691.0" text-anchor="middle" font-family="Liberation Sans" font-size="13.2" fill="#555">2</text>
<line x1="863.47" y1="671.8" x2="863.47" y2="676.1" stroke="#333" stroke-width="1.1"/>
<text x="863.47" y="691.0" text-anchor="middle" font-family="Liberation Sans" font-size="13.2" fill="#555">3</text>
<line x1="877.21" y1="671.8" x2="877.21" y2="676.1" stroke="#333" stroke-width="1.1"/>
<text x="877.21" y="691.0" text-anchor="middle" font-family="Liberation Sans" font-size="13.2" fill="#555">4</text>
<line x1="890.95" y1="671.8" x2="890.95" y2="676.1" stroke="#333" stroke-width="1.1"/>
<text x="890.95" y="691.0" text-anchor="middle" font-family="Liberation Sans" font-size="13.2" fill="#555">5</text>
<line x1="904.75" y1="671.8" x2="904.75" y2="676.1" stroke="#333" stroke-width="1.1"/>
<text x="904.75" y="691.0" text-anchor="middle" font-family="Liberation Sans" font-size="13.2" fill="#555">0</text>
<line x1="918.49" y1="671.8" x2="918.49" y2="676.1" stroke="#333" stroke-width="1.1"/>
<text x="918.49" y="691.0" text-anchor="middle" font-family="Liberation Sans" font-size="13.2" fill="#555">1</text>
<line x1="932.23" y1="671.8" x2="932.23" y2="676.1" stroke="#333" stroke-width="1.1"/>
<text x="932.23" y="691.0" text-anchor="middle" font-family="Liberation Sans" font-size="13.2" fill="#555">2</text>
<line x1="945.97" y1="671.8" x2="945.97" y2="676.1" stroke="#333" stroke-width="1.1"/>
<text x="945.97" y="691.0" text-anchor="middle" font-family="Liberation Sans" font-size="13.2" fill="#555">3</text>
<line x1="959.71" y1="671.8" x2="959.71" y2="676.1" stroke="#333" stroke-width="1.1"/>
<text x="959.71" y="691.0" text-anchor="middle" font-family="Liberation Sans" font-size="13.2" fill="#555">4</text>
<line x1="973.45" y1="671.8" x2="973.45" y2="676.1" stroke="#333" stroke-width="1.1"/>
<text x="973.45" y="691.0" text-anchor="middle" font-family="Liberation Sans" font-size="13.2" fill="#555">5</text>
<line x1="739.75" y1="764.6" x2="739.75" y2="768.9" stroke="#333" stroke-width="1.1"/>
<text x="739.75" y="783.8" text-anchor="middle" font-family="Liberation Sans" font-size="13.2" fill="#555">0</text>
<line x1="753.49" y1="764.6" x2="753.49" y2="768.9" stroke="#333" stroke-width="1.1"/>
<text x="753.49" y="783.8" text-anchor="middle" font-family="Liberation Sans" font-size="13.2" fill="#555">1</text>
<line x1="767.23" y1="764.6" x2="767.23" y2="768.9" stroke="#333" stroke-width="1.1"/>
<text x="767.23" y="783.8" text-anchor="middle" font-family="Liberation Sans" font-size="13.2" fill="#555">2</text>
<line x1="780.97" y1="764.6" x2="780.97" y2="768.9" stroke="#333" stroke-width="1.1"/>
<text x="780.97" y="783.8" text-anchor="middle" font-family="Liberation Sans" font-size="13.2" fill="#555">3</text>
<line x1="794.71" y1="764.6" x2="794.71" y2="768.9" stroke="#333" stroke-width="1.1"/>
<text x="794.71" y="783.8" text-anchor="middle" font-family="Liberation Sans" font-size="13.2" fill="#555">4</text>
<line x1="808.45" y1="764.6" x2="808.45" y2="768.9" stroke="#333" stroke-width="1.1"/>
<text x="808.45" y="783.8" text-anchor="middle" font-family="Liberation Sans" font-size="13.2" fill="#555">5</text>
<g><clipPath id="cpD"><rect x="739.2" y="523.3" width="72.7" height="55.2"/></clipPath><g clip-path="url(#cpD)">
<polygon points="750.4,524.5 749.3,542.2 747.8,551.0 744.1,561.4 740.4,568.7 738.2,573.9 738.2,578.5 747.8,578.5 754.5,574.7 761.8,568.7 765.5,562.8 767.0,558.4 770.0,551.8 772.2,543.6 776.5,537.0 774.0,534.0 777.4,531.1 778.1,527.4 772.9,524.5" fill="#440154" stroke="#440154" stroke-width="2.5" stroke-linejoin="round"/>
<polygon points="750.4,524.5 750.2,527.4 750.0,531.1 749.8,534.0 749.6,537.0 749.3,542.2 749.1,543.6 747.8,551.0 747.5,551.8 745.2,558.4 744.1,561.4 743.4,562.8 740.4,568.7 738.2,573.9 738.2,574.7 738.2,578.5 746.4,578.5 752.2,574.7 753.1,573.9 759.2,568.7 763.1,562.8 763.7,561.4 764.9,558.4 768.3,551.8 768.6,551.0 771.0,543.6 771.9,542.2 775.6,537.0 773.4,534.0 776.9,531.1 777.9,527.4 772.9,524.5" fill="#46337E" stroke="#46337E" stroke-width="2.5" stroke-linejoin="round"/>
<polygon points="750.4,524.5 750.2,527.4 750.0,531.1 749.8,534.0 749.6,537.0 749.3,542.2 749.1,543.6 747.8,551.0 747.5,551.8 745.2,558.4 744.1,561.4 743.4,562.8 740.4,568.7 738.2,573.9 738.2,574.7 738.2,578.5 744.0,578.5 747.9,574.7 748.5,573.9 753.0,568.7 756.3,562.8 756.9,561.4 757.9,558.4 760.5,551.8 760.7,551.0 762.2,543.6 762.8,542.2 764.7,537.0 763.3,534.0 765.2,531.1 765.6,527.4 762.8,524.5" fill="#365C8D" stroke="#365C8D" stroke-width="1.0" stroke-linejoin="round"/>
<polygon points="750.4,524.5 750.2,527.4 750.0,531.1 749.8,534.0 749.6,537.0 749.3,542.2 749.1,543.6 747.8,551.0 747.5,551.8 745.2,558.4 744.1,561.4 743.4,562.8 740.4,568.7 738.2,573.9 738.2,574.7 738.2,578.5 743.0,578.5 746.3,574.7 746.8,573.9 751.0,568.7 754.3,562.8 754.9,561.4 755.9,558.4 758.5,551.8 758.8,551.0 760.3,543.6 760.9,542.2 762.6,537.0 761.5,534.0 763.2,531.1 763.6,527.4 761.2,524.5" fill="#277F8E" stroke="#277F8E" stroke-width="1.0" stroke-linejoin="round"/>
<polygon points="750.4,524.5 750.2,527.4 750.0,531.1 749.8,534.0 749.6,537.0 749.3,542.2 749.1,543.6 747.8,551.0 747.5,551.8 745.2,558.4 744.1,561.4 743.4,562.8 740.4,568.7 738.2,573.9 738.2,574.7 738.2,578.5 742.0,578.5 744.7,574.7 745.1,573.9 749.0,568.7 752.4,562.8 753.0,561.4 754.1,558.4 756.7,551.8 757.0,551.0 758.6,543.6 759.1,542.2 760.8,537.0 759.9,534.0 761.4,531.1 761.9,527.4 759.9,524.5" fill="#1FA187" stroke="#1FA187" stroke-width="1.0" stroke-linejoin="round"/>
<polygon points="750.4,524.5 750.2,527.4 750.0,531.1 749.8,534.0 749.6,537.0 749.3,542.2 749.1,543.6 747.8,551.0 747.5,551.8 745.2,558.4 744.1,561.4 743.4,562.8 740.4,568.7 738.2,573.9 738.2,574.7 738.2,578.5 741.1,578.5 743.2,574.7 743.5,573.9 747.1,568.7 750.5,562.8 751.2,561.4 752.4,558.4 755.2,551.8 755.4,551.0 757.2,543.6 757.7,542.2 759.3,537.0 758.7,534.0 760.1,531.1 760.7,527.4 758.9,524.5" fill="#4AC16D" stroke="#4AC16D" stroke-width="1.0" stroke-linejoin="round"/>
<polygon points="750.4,524.5 750.2,527.4 750.0,531.1 749.8,534.0 749.6,537.0 749.3,542.2 749.1,543.6 747.8,551.0 747.5,551.8 745.2,558.4 744.1,561.4 743.4,562.8 740.4,568.7 738.2,573.9 738.2,574.7 738.2,578.5 740.1,578.5 741.6,574.7 741.8,573.9 745.1,568.7 748.5,562.8 749.2,561.4 750.3,558.4 753.1,551.8 753.4,551.0 755.2,543.6 755.7,542.2 757.1,537.0 756.6,534.0 757.9,531.1 758.4,527.4 757.1,524.5" fill="#9FDA3A" stroke="#9FDA3A" stroke-width="1.0" stroke-linejoin="round"/>
<polygon points="750.4,524.5 750.2,527.4 750.0,531.1 749.8,534.0 749.6,537.0 749.3,542.2 749.1,543.6 747.8,551.0 747.5,551.8 745.2,558.4 744.1,561.4 743.4,562.8 740.4,568.7 738.2,573.9 738.2,574.7 738.2,578.5 738.6,578.5 739.1,574.7 739.2,573.9 742.1,568.7 745.6,562.8 746.4,561.4 747.7,558.4 750.7,551.8 751.1,551.0 753.1,543.6 753.6,542.2 755.0,537.0 755.0,534.0 756.1,531.1 756.9,527.4 756.0,524.5" fill="#FDE725" stroke="#FDE725" stroke-width="1.0" stroke-linejoin="round"/>
<circle cx="771.4" cy="524.5" r="2.8" fill="#46337E"/>
<circle cx="776.6" cy="527.4" r="2.8" fill="#46337E"/>
<circle cx="775.9" cy="531.1" r="2.8" fill="#46337E"/>
<circle cx="772.5" cy="534.0" r="2.8" fill="#46337E"/>
<circle cx="775.0" cy="537.0" r="2.8" fill="#46337E"/>
<circle cx="770.7" cy="543.6" r="2.8" fill="#46337E"/>
<circle cx="768.5" cy="551.8" r="2.8" fill="#440154"/>
<circle cx="765.5" cy="558.4" r="2.8" fill="#440154"/>
<circle cx="764.0" cy="562.8" r="2.8" fill="#440154"/>
<circle cx="760.3" cy="568.7" r="2.8" fill="#440154"/>
<circle cx="753.0" cy="574.7" r="2.8" fill="#440154"/>
<circle cx="786.2" cy="534" r="3.6" fill="#440154"/>
<circle cx="777.4" cy="542.2" r="3.6" fill="#440154"/>
<circle cx="764.1" cy="562.8" r="3.6" fill="#440154"/>
<circle cx="757" cy="571" r="3.6" fill="#440154"/>
<circle cx="749.7" cy="568.7" r="3.6" fill="#46337E"/>
<circle cx="742" cy="574" r="3.6" fill="#365C8D"/>
<circle cx="746" cy="576" r="3.6" fill="#365C8D"/>
</g>
<clipPath id="cpE"><rect x="821.7" y="523.3" width="72.7" height="55.2"/></clipPath><g clip-path="url(#cpE)">
<polygon points="836.1,524.5 832.0,542.0 829.8,557.0 824.6,567.3 820.6,573.2 820.6,578.5 829.8,578.5 838.0,575.4 846.0,570.2 848.3,561.4 852.7,554.7 858.6,548.8 854.2,544.4 855.0,535.5 862.3,532.0 862.3,528.0 854.2,524.5" fill="#440154" stroke="#440154" stroke-width="2.5" stroke-linejoin="round"/>
<polygon points="836.1,524.5 835.3,528.0 834.3,532.0 833.5,535.5 832.0,542.0 831.6,544.4 831.0,548.8 830.1,554.7 829.8,557.0 827.6,561.4 824.6,567.3 822.6,570.2 820.6,573.2 820.6,575.4 820.6,578.5 827.0,578.5 833.1,575.4 835.8,573.2 840.1,570.2 841.5,567.3 844.1,561.4 847.3,557.0 848.9,554.7 854.9,548.8 851.7,544.4 852.2,542.0 853.7,535.5 861.1,532.0 861.8,528.0 854.2,524.5" fill="#46337E" stroke="#46337E" stroke-width="2.5" stroke-linejoin="round"/>
<polygon points="836.1,524.5 835.3,528.0 834.3,532.0 833.5,535.5 832.0,542.0 831.6,544.4 831.0,548.8 830.1,554.7 829.8,557.0 827.6,561.4 824.6,567.3 822.6,570.2 820.6,573.2 820.6,575.4 820.6,578.5 825.2,578.5 829.4,575.4 831.2,573.2 834.7,570.2 836.2,567.3 838.7,561.4 841.5,557.0 842.6,554.7 846.6,548.8 844.6,544.4 845.0,542.0 846.3,535.5 851.2,532.0 851.8,528.0 847.3,524.5" fill="#365C8D" stroke="#365C8D" stroke-width="1.0" stroke-linejoin="round"/>
<polygon points="836.1,524.5 835.3,528.0 834.3,532.0 833.5,535.5 832.0,542.0 831.6,544.4 831.0,548.8 830.1,554.7 829.8,557.0 827.6,561.4 824.6,567.3 822.6,570.2 820.6,573.2 820.6,575.4 820.6,578.5 824.7,578.5 828.5,575.4 830.2,573.2 833.5,570.2 835.0,567.3 837.6,561.4 840.3,557.0 841.3,554.7 844.9,548.8 843.2,544.4 843.6,542.0 844.9,535.5 849.3,532.0 850.0,528.0 846.1,524.5" fill="#277F8E" stroke="#277F8E" stroke-width="1.0" stroke-linejoin="round"/>
<polygon points="836.1,524.5 835.3,528.0 834.3,532.0 833.5,535.5 832.0,542.0 831.6,544.4 831.0,548.8 830.1,554.7 829.8,557.0 827.6,561.4 824.6,567.3 822.6,570.2 820.6,573.2 820.6,575.4 820.6,578.5 823.8,578.5 826.8,575.4 828.1,573.2 831.2,570.2 832.8,567.3 835.5,561.4 838.1,557.0 839.0,554.7 842.2,548.8 841.0,544.4 841.4,542.0 842.8,535.5 846.5,532.0 847.3,528.0 844.2,524.5" fill="#1FA187" stroke="#1FA187" stroke-width="1.0" stroke-linejoin="round"/>
<polygon points="836.1,524.5 835.3,528.0 834.3,532.0 833.5,535.5 832.0,542.0 831.6,544.4 831.0,548.8 830.1,554.7 829.8,557.0 827.6,561.4 824.6,567.3 822.6,570.2 820.6,573.2 820.6,575.4 820.6,578.5 823.4,578.5 825.8,575.4 826.9,573.2 829.7,570.2 831.3,567.3 833.9,561.4 836.4,557.0 837.1,554.7 839.6,548.8 838.7,544.4 839.0,542.0 840.3,535.5 843.2,532.0 843.9,528.0 841.9,524.5" fill="#4AC16D" stroke="#4AC16D" stroke-width="1.0" stroke-linejoin="round"/>
<polygon points="836.1,524.5 835.3,528.0 834.3,532.0 833.5,535.5 832.0,542.0 831.6,544.4 831.0,548.8 830.1,554.7 829.8,557.0 827.6,561.4 824.6,567.3 822.6,570.2 820.6,573.2 820.6,575.4 820.6,578.5 822.4,578.5 824.1,575.4 824.8,573.2 827.3,570.2 829.0,567.3 831.7,561.4 834.1,557.0 834.6,554.7 836.5,548.8 836.2,544.4 836.5,542.0 837.8,535.5 839.9,532.0 840.7,528.0 839.7,524.5" fill="#9FDA3A" stroke="#9FDA3A" stroke-width="1.0" stroke-linejoin="round"/>
<polygon points="836.1,524.5 835.3,528.0 834.3,532.0 833.5,535.5 832.0,542.0 831.6,544.4 831.0,548.8 830.1,554.7 829.8,557.0 827.6,561.4 824.6,567.3 822.6,570.2 820.6,573.2 820.6,575.4 820.6,578.5 820.9,578.5 821.2,575.4 821.4,573.2 823.7,570.2 825.7,567.3 828.8,561.4 831.2,557.0 831.7,554.7 833.2,548.8 833.6,544.4 834.0,542.0 835.7,535.5 837.3,532.0 838.4,528.0 838.3,524.5" fill="#FDE725" stroke="#FDE725" stroke-width="1.0" stroke-linejoin="round"/>
<circle cx="852.7" cy="524.5" r="2.8" fill="#46337E"/>
<circle cx="860.8" cy="528.0" r="2.8" fill="#46337E"/>
<circle cx="860.8" cy="532.0" r="2.8" fill="#46337E"/>
<circle cx="853.5" cy="535.5" r="2.8" fill="#46337E"/>
<circle cx="852.7" cy="544.4" r="2.8" fill="#46337E"/>
<circle cx="857.1" cy="548.8" r="2.8" fill="#46337E"/>
<circle cx="851.2" cy="554.7" r="2.8" fill="#440154"/>
<circle cx="846.8" cy="561.4" r="2.8" fill="#440154"/>
<circle cx="844.5" cy="570.2" r="2.8" fill="#440154"/>
<circle cx="836.5" cy="575.4" r="2.8" fill="#440154"/>
<circle cx="863.8" cy="545.5" r="3.6" fill="#440154"/>
<circle cx="863.8" cy="549.5" r="3.6" fill="#440154"/>
<circle cx="831" cy="569" r="3.6" fill="#277F8E"/>
<circle cx="826" cy="575" r="3.6" fill="#9FDA3A"/>
<circle cx="823" cy="575" r="3.6" fill="#9FDA3A"/>
</g>
<clipPath id="cpF"><rect x="904.2" y="523.3" width="72.7" height="55.2"/></clipPath><g clip-path="url(#cpF)">
<polygon points="919.9,524.5 917.0,534.8 914.4,549.5 911.8,557.7 907.4,564.3 903.3,573.2 903.3,578.5 914.0,578.5 917.0,576.9 928.8,568.7 936.2,559.9 937.7,553.2 936.9,548.1 943.6,542.9 938.4,537.7 941.4,534.8 945.0,527.0 945.0,524.5" fill="#440154" stroke="#440154" stroke-width="2.5" stroke-linejoin="round"/>
<polygon points="919.9,524.5 919.2,527.0 917.0,534.8 916.5,537.7 915.6,542.9 914.6,548.1 914.4,549.5 913.2,553.2 911.8,557.7 910.3,559.9 907.4,564.3 905.4,568.7 903.3,573.2 903.3,576.9 903.3,578.5 909.2,578.5 911.0,576.9 914.6,573.2 920.2,568.7 924.2,564.3 928.6,559.9 929.8,557.7 931.8,553.2 932.4,549.5 932.5,548.1 939.3,542.9 936.0,537.7 939.3,534.8 944.5,527.0 945.0,524.5" fill="#46337E" stroke="#46337E" stroke-width="2.5" stroke-linejoin="round"/>
<polygon points="919.9,524.5 919.2,527.0 917.0,534.8 916.5,537.7 915.6,542.9 914.6,548.1 914.4,549.5 913.2,553.2 911.8,557.7 910.3,559.9 907.4,564.3 905.4,568.7 903.3,573.2 903.3,576.9 903.3,578.5 908.1,578.5 909.5,576.9 912.0,573.2 916.2,568.7 919.2,564.3 922.6,559.9 923.7,557.7 925.0,553.2 925.5,549.5 925.5,548.1 929.5,542.9 927.5,537.7 929.4,534.8 932.5,527.0 933.0,524.5" fill="#365C8D" stroke="#365C8D" stroke-width="1.0" stroke-linejoin="round"/>
<polygon points="919.9,524.5 919.2,527.0 917.0,534.8 916.5,537.7 915.6,542.9 914.6,548.1 914.4,549.5 913.2,553.2 911.8,557.7 910.3,559.9 907.4,564.3 905.4,568.7 903.3,573.2 903.3,576.9 903.3,578.5 907.6,578.5 908.8,576.9 911.0,573.2 915.0,568.7 917.8,564.3 921.1,559.9 922.2,557.7 923.6,553.2 924.1,549.5 924.2,548.1 927.7,542.9 926.1,537.7 927.7,534.8 930.7,527.0 931.2,524.5" fill="#277F8E" stroke="#277F8E" stroke-width="1.0" stroke-linejoin="round"/>
<polygon points="919.9,524.5 919.2,527.0 917.0,534.8 916.5,537.7 915.6,542.9 914.6,548.1 914.4,549.5 913.2,553.2 911.8,557.7 910.3,559.9 907.4,564.3 905.4,568.7 903.3,573.2 903.3,576.9 903.3,578.5 907.0,578.5 908.1,576.9 909.9,573.2 913.4,568.7 915.9,564.3 918.9,559.9 920.0,557.7 921.2,553.2 921.7,549.5 921.8,548.1 924.5,542.9 923.3,537.7 924.6,534.8 927.0,527.0 927.4,524.5" fill="#1FA187" stroke="#1FA187" stroke-width="1.0" stroke-linejoin="round"/>
<polygon points="919.9,524.5 919.2,527.0 917.0,534.8 916.5,537.7 915.6,542.9 914.6,548.1 914.4,549.5 913.2,553.2 911.8,557.7 910.3,559.9 907.4,564.3 905.4,568.7 903.3,573.2 903.3,576.9 903.3,578.5 906.5,578.5 907.4,576.9 908.9,573.2 912.1,568.7 914.4,564.3 917.4,559.9 918.5,557.7 919.7,553.2 920.2,549.5 920.3,548.1 922.5,542.9 921.7,537.7 922.7,534.8 925.0,527.0 925.4,524.5" fill="#4AC16D" stroke="#4AC16D" stroke-width="1.0" stroke-linejoin="round"/>
<polygon points="919.9,524.5 919.2,527.0 917.0,534.8 916.5,537.7 915.6,542.9 914.6,548.1 914.4,549.5 913.2,553.2 911.8,557.7 910.3,559.9 907.4,564.3 905.4,568.7 903.3,573.2 903.3,576.9 903.3,578.5 905.4,578.5 906.0,576.9 907.0,573.2 909.8,568.7 912.0,564.3 915.0,559.9 916.2,557.7 917.4,553.2 918.2,549.5 918.3,548.1 920.1,542.9 919.9,537.7 920.7,534.8 922.9,527.0 923.4,524.5" fill="#9FDA3A" stroke="#9FDA3A" stroke-width="1.0" stroke-linejoin="round"/>
<polygon points="919.9,524.5 919.2,527.0 917.0,534.8 916.5,537.7 915.6,542.9 914.6,548.1 914.4,549.5 913.2,553.2 911.8,557.7 910.3,559.9 907.4,564.3 905.4,568.7 903.3,573.2 903.3,576.9 903.3,578.5 903.6,578.5 903.7,576.9 904.0,573.2 906.3,568.7 908.5,564.3 911.6,559.9 913.0,557.7 914.5,553.2 915.7,549.5 915.9,548.1 917.3,542.9 918.0,537.7 918.7,534.8 921.2,527.0 921.9,524.5" fill="#FDE725" stroke="#FDE725" stroke-width="1.0" stroke-linejoin="round"/>
<circle cx="943.5" cy="524.5" r="2.8" fill="#46337E"/>
<circle cx="943.5" cy="527.0" r="2.8" fill="#46337E"/>
<circle cx="939.9" cy="534.8" r="2.8" fill="#46337E"/>
<circle cx="936.9" cy="537.7" r="2.8" fill="#46337E"/>
<circle cx="942.1" cy="542.9" r="2.8" fill="#46337E"/>
<circle cx="935.4" cy="548.1" r="2.8" fill="#46337E"/>
<circle cx="936.2" cy="553.2" r="2.8" fill="#440154"/>
<circle cx="934.7" cy="559.9" r="2.8" fill="#440154"/>
<circle cx="931.0" cy="564.3" r="2.8" fill="#440154"/>
<circle cx="927.3" cy="568.7" r="2.8" fill="#440154"/>
<circle cx="921.4" cy="572.8" r="2.8" fill="#440154"/>
<circle cx="915.5" cy="576.9" r="2.8" fill="#440154"/>
<circle cx="946.2" cy="550.3" r="3.6" fill="#440154"/>
<circle cx="915" cy="569" r="3.6" fill="#365C8D"/>
<circle cx="906" cy="575" r="3.6" fill="#9FDA3A"/>
</g>
<clipPath id="cpG"><rect x="739.2" y="616.7" width="72.7" height="55.1"/></clipPath><g clip-path="url(#cpG)">
<polygon points="756.7,617.5 754.5,626.8 750.8,636.4 748.9,643.0 746.3,653.4 741.9,660.7 738.2,666.7 738.2,671.8 748.6,671.8 754.5,668.1 764.1,660.0 774.4,654.1 779.6,647.5 776.0,637.0 781.8,636.0 784.0,631.2 777.4,626.8 779.6,623.8 781.0,617.5" fill="#440154" stroke="#440154" stroke-width="2.5" stroke-linejoin="round"/>
<polygon points="756.7,617.5 755.2,623.8 754.5,626.8 752.8,631.2 751.0,636.0 750.8,636.4 750.6,637.0 748.9,643.0 747.8,647.5 746.3,653.4 745.9,654.1 742.3,660.0 741.9,660.7 738.2,666.7 738.2,668.1 738.2,671.8 743.9,671.8 747.7,668.1 748.8,666.7 755.6,660.7 756.4,660.0 765.7,654.1 766.4,653.4 771.7,647.5 771.9,643.0 771.9,637.0 775.0,636.4 777.1,636.0 780.5,631.2 775.6,626.8 778.3,623.8 781.0,617.5" fill="#46337E" stroke="#46337E" stroke-width="2.5" stroke-linejoin="round"/>
<polygon points="756.7,617.5 755.2,623.8 754.5,626.8 752.8,631.2 751.0,636.0 750.8,636.4 750.6,637.0 748.9,643.0 747.8,647.5 746.3,653.4 745.9,654.1 742.3,660.0 741.9,660.7 738.2,666.7 738.2,668.1 738.2,671.8 742.9,671.8 745.6,668.1 746.5,666.7 752.0,660.7 752.6,660.0 759.6,654.1 760.2,653.4 763.5,647.5 763.6,643.0 763.7,637.0 765.6,636.4 766.9,636.0 769.2,631.2 766.7,626.8 768.3,623.8 770.1,617.5" fill="#365C8D" stroke="#365C8D" stroke-width="1.0" stroke-linejoin="round"/>
<polygon points="756.7,617.5 755.2,623.8 754.5,626.8 752.8,631.2 751.0,636.0 750.8,636.4 750.6,637.0 748.9,643.0 747.8,647.5 746.3,653.4 745.9,654.1 742.3,660.0 741.9,660.7 738.2,666.7 738.2,668.1 738.2,671.8 742.4,671.8 744.8,668.1 745.5,666.7 750.7,660.7 751.3,660.0 757.8,654.1 758.2,653.4 761.2,647.5 761.3,643.0 761.6,637.0 763.2,636.4 764.3,636.0 766.4,631.2 764.6,626.8 766.0,623.8 767.6,617.5" fill="#277F8E" stroke="#277F8E" stroke-width="1.0" stroke-linejoin="round"/>
<polygon points="756.7,617.5 755.2,623.8 754.5,626.8 752.8,631.2 751.0,636.0 750.8,636.4 750.6,637.0 748.9,643.0 747.8,647.5 746.3,653.4 745.9,654.1 742.3,660.0 741.9,660.7 738.2,666.7 738.2,668.1 738.2,671.8 741.8,671.8 743.9,668.1 744.5,666.7 749.5,660.7 750.1,660.0 756.1,654.1 756.6,653.4 759.3,647.5 759.6,643.0 760.0,637.0 761.4,636.4 762.4,636.0 764.4,631.2 763.1,626.8 764.4,623.8 765.9,617.5" fill="#1FA187" stroke="#1FA187" stroke-width="1.0" stroke-linejoin="round"/>
<polygon points="756.7,617.5 755.2,623.8 754.5,626.8 752.8,631.2 751.0,636.0 750.8,636.4 750.6,637.0 748.9,643.0 747.8,647.5 746.3,653.4 745.9,654.1 742.3,660.0 741.9,660.7 738.2,666.7 738.2,668.1 738.2,671.8 741.3,671.8 743.1,668.1 743.6,666.7 748.4,660.7 748.9,660.0 754.6,654.1 755.1,653.4 757.6,647.5 758.0,643.0 758.6,637.0 759.8,636.4 760.6,636.0 762.6,631.2 761.7,626.8 763.0,623.8 764.5,617.5" fill="#4AC16D" stroke="#4AC16D" stroke-width="1.0" stroke-linejoin="round"/>
<polygon points="756.7,617.5 755.2,623.8 754.5,626.8 752.8,631.2 751.0,636.0 750.8,636.4 750.6,637.0 748.9,643.0 747.8,647.5 746.3,653.4 745.9,654.1 742.3,660.0 741.9,660.7 738.2,666.7 738.2,668.1 738.2,671.8 739.8,671.8 740.7,668.1 740.9,666.7 745.2,660.7 745.7,660.0 750.4,654.1 750.9,653.4 753.0,647.5 753.7,643.0 754.9,637.0 755.7,636.4 756.2,636.0 758.2,631.2 758.5,626.8 759.5,623.8 761.1,617.5" fill="#9FDA3A" stroke="#9FDA3A" stroke-width="1.0" stroke-linejoin="round"/>
<polygon points="756.7,617.5 755.2,623.8 754.5,626.8 752.8,631.2 751.0,636.0 750.8,636.4 750.6,637.0 748.9,643.0 747.8,647.5 746.3,653.4 745.9,654.1 742.3,660.0 741.9,660.7 738.2,666.7 738.2,668.1 738.2,671.8 738.5,671.8 738.7,668.1 738.8,666.7 742.8,660.7 743.2,660.0 747.2,654.1 747.6,653.4 749.4,647.5 750.5,643.0 752.2,637.0 752.6,636.4 752.9,636.0 754.9,631.2 756.1,626.8 757.0,623.8 758.6,617.5" fill="#FDE725" stroke="#FDE725" stroke-width="1.0" stroke-linejoin="round"/>
<circle cx="779.5" cy="617.5" r="2.8" fill="#46337E"/>
<circle cx="778.1" cy="623.8" r="2.8" fill="#46337E"/>
<circle cx="775.9" cy="626.8" r="2.8" fill="#46337E"/>
<circle cx="782.5" cy="631.2" r="2.8" fill="#46337E"/>
<circle cx="780.3" cy="636.0" r="2.8" fill="#46337E"/>
<circle cx="774.5" cy="637.0" r="2.8" fill="#46337E"/>
<circle cx="776.3" cy="642.2" r="2.8" fill="#440154"/>
<circle cx="778.1" cy="647.5" r="2.8" fill="#440154"/>
<circle cx="772.9" cy="654.1" r="2.8" fill="#440154"/>
<circle cx="767.8" cy="657.0" r="2.8" fill="#440154"/>
<circle cx="762.6" cy="660.0" r="2.8" fill="#440154"/>
<circle cx="757.8" cy="664.0" r="2.8" fill="#440154"/>
<circle cx="753.0" cy="668.1" r="2.8" fill="#440154"/>
<circle cx="759" cy="620" r="3.6" fill="#FDE725"/>
<circle cx="742" cy="667" r="3.6" fill="#4AC16D"/>
<circle cx="749" cy="663" r="3.6" fill="#1FA187"/>
<circle cx="781" cy="634" r="3.6" fill="#46337E"/>
</g>
<clipPath id="cpH"><rect x="821.7" y="616.7" width="72.7" height="55.1"/></clipPath><g clip-path="url(#cpH)">
<polygon points="846.1,617.5 842.4,625.3 837.9,634.2 832.8,645.2 827.6,656.3 821.0,668.1 821.0,671.8 829.0,671.8 835.0,669.6 845.3,663.7 849.8,657.8 854.0,645.0 859.4,636.4 863.0,630.5 863.8,624.0 866.7,620.0 866.0,617.5" fill="#440154" stroke="#440154" stroke-width="2.5" stroke-linejoin="round"/>
<polygon points="852.0,650.0 861.0,636.0 869.7,633.4 875.6,637.0 874.0,641.5 866.7,641.5 866.0,649.7 865.3,654.0 861.6,655.6 858.6,651.1 849.8,657.8 845.0,663.0 838.0,668.0" fill="#440154" stroke="#440154" stroke-width="2.5" stroke-linejoin="round"/>
<polygon points="846.1,617.5 844.9,620.0 843.0,624.0 842.4,625.3 839.8,630.5 837.9,634.2 836.9,636.4 832.9,645.0 832.8,645.2 827.6,656.3 826.8,657.8 823.5,663.7 821.0,668.1 821.0,669.6 821.0,671.8 825.8,671.8 829.6,669.6 831.4,668.1 837.9,663.7 843.0,657.8 843.8,656.3 849.6,645.2 849.7,645.0 856.3,636.4 857.9,634.2 860.8,630.5 862.4,625.3 862.8,624.0 866.3,620.0 866.0,617.5" fill="#46337E" stroke="#46337E" stroke-width="2.5" stroke-linejoin="round"/>
<polygon points="846.1,617.5 844.9,620.0 843.0,624.0 842.4,625.3 839.8,630.5 837.9,634.2 836.9,636.4 832.9,645.0 832.8,645.2 827.6,656.3 826.8,657.8 823.5,663.7 821.0,668.1 821.0,669.6 821.0,671.8 825.0,671.8 828.0,669.6 829.3,668.1 834.2,663.7 838.0,657.8 838.6,656.3 842.8,645.2 842.9,645.0 847.4,636.4 848.5,634.2 850.5,630.5 852.1,625.3 852.5,624.0 854.8,620.0 855.1,617.5" fill="#365C8D" stroke="#365C8D" stroke-width="1.0" stroke-linejoin="round"/>
<polygon points="846.1,617.5 844.9,620.0 843.0,624.0 842.4,625.3 839.8,630.5 837.9,634.2 836.9,636.4 832.9,645.0 832.8,645.2 827.6,656.3 826.8,657.8 823.5,663.7 821.0,668.1 821.0,669.6 821.0,671.8 824.6,671.8 827.3,669.6 828.4,668.1 833.1,663.7 836.8,657.8 837.5,656.3 841.8,645.2 841.9,645.0 846.3,636.4 847.4,634.2 849.3,630.5 851.0,625.3 851.5,624.0 853.7,620.0 854.1,617.5" fill="#277F8E" stroke="#277F8E" stroke-width="1.0" stroke-linejoin="round"/>
<polygon points="846.1,617.5 844.9,620.0 843.0,624.0 842.4,625.3 839.8,630.5 837.9,634.2 836.9,636.4 832.9,645.0 832.8,645.2 827.6,656.3 826.8,657.8 823.5,663.7 821.0,668.1 821.0,669.6 821.0,671.8 824.2,671.8 826.5,669.6 827.5,668.1 831.9,663.7 835.4,657.8 836.0,656.3 840.2,645.2 840.3,645.0 844.4,636.4 845.5,634.2 847.3,630.5 849.1,625.3 849.5,624.0 851.6,620.0 852.1,617.5" fill="#1FA187" stroke="#1FA187" stroke-width="1.0" stroke-linejoin="round"/>
<polygon points="846.1,617.5 844.9,620.0 843.0,624.0 842.4,625.3 839.8,630.5 837.9,634.2 836.9,636.4 832.9,645.0 832.8,645.2 827.6,656.3 826.8,657.8 823.5,663.7 821.0,668.1 821.0,669.6 821.0,671.8 823.4,671.8 825.2,669.6 825.9,668.1 829.8,663.7 833.2,657.8 833.9,656.3 838.3,645.2 838.4,645.0 842.5,636.4 843.5,634.2 845.3,630.5 847.3,625.3 847.8,624.0 849.8,620.0 850.5,617.5" fill="#4AC16D" stroke="#4AC16D" stroke-width="1.0" stroke-linejoin="round"/>
<polygon points="846.1,617.5 844.9,620.0 843.0,624.0 842.4,625.3 839.8,630.5 837.9,634.2 836.9,636.4 832.9,645.0 832.8,645.2 827.6,656.3 826.8,657.8 823.5,663.7 821.0,668.1 821.0,669.6 821.0,671.8 822.2,671.8 823.1,669.6 823.5,668.1 826.6,663.7 830.0,657.8 830.8,656.3 835.7,645.2 835.7,645.0 839.8,636.4 840.9,634.2 842.7,630.5 845.0,625.3 845.6,624.0 847.6,620.0 848.5,617.5" fill="#9FDA3A" stroke="#9FDA3A" stroke-width="1.0" stroke-linejoin="round"/>
<polygon points="846.1,617.5 844.9,620.0 843.0,624.0 842.4,625.3 839.8,630.5 837.9,634.2 836.9,636.4 832.9,645.0 832.8,645.2 827.6,656.3 826.8,657.8 823.5,663.7 821.0,668.1 821.0,669.6 821.0,671.8 821.2,671.8 821.3,669.6 821.4,668.1 824.0,663.7 827.4,657.8 828.2,656.3 833.5,645.2 833.6,645.0 837.8,636.4 838.8,634.2 840.8,630.5 843.4,625.3 844.0,624.0 846.0,620.0 847.1,617.5" fill="#FDE725" stroke="#FDE725" stroke-width="1.0" stroke-linejoin="round"/>
<circle cx="864.5" cy="617.5" r="2.8" fill="#46337E"/>
<circle cx="865.2" cy="620.0" r="2.8" fill="#46337E"/>
<circle cx="862.3" cy="624.0" r="2.8" fill="#46337E"/>
<circle cx="861.5" cy="630.5" r="2.8" fill="#46337E"/>
<circle cx="857.9" cy="636.4" r="2.8" fill="#46337E"/>
<circle cx="855.2" cy="640.7" r="2.8" fill="#46337E"/>
<circle cx="852.5" cy="645.0" r="2.8" fill="#440154"/>
<circle cx="850.4" cy="651.4" r="2.8" fill="#440154"/>
<circle cx="848.3" cy="657.8" r="2.8" fill="#440154"/>
<circle cx="843.8" cy="663.7" r="2.8" fill="#440154"/>
<circle cx="838.6" cy="666.7" r="2.8" fill="#440154"/>
<circle cx="833.5" cy="669.6" r="2.8" fill="#440154"/>
<circle cx="879.3" cy="623.4" r="3.6" fill="#440154"/>
<circle cx="826" cy="668" r="3.6" fill="#277F8E"/>
<circle cx="834" cy="662" r="3.6" fill="#46337E"/>
</g>
<clipPath id="cpI"><rect x="904.2" y="616.7" width="72.7" height="55.1"/></clipPath><g clip-path="url(#cpI)">
<polygon points="928.8,617.5 928.8,625.3 925.1,627.5 922.2,634.2 916.2,648.9 911.1,657.8 903.7,666.7 903.7,671.8 912.0,671.8 915.5,669.6 924.4,663.0 931.8,654.8 938.4,645.2 942.8,637.8 945.8,632.7 950.2,626.8 950.2,617.5" fill="#440154" stroke="#440154" stroke-width="2.5" stroke-linejoin="round"/>
<polygon points="936.0,650.0 944.3,636.4 948.7,633.4 951.7,636.4 949.5,643.0 949.5,648.9 945.8,651.1 942.1,648.2 935.5,656.3 928.0,662.0 920.0,668.0" fill="#440154" stroke="#440154" stroke-width="2.5" stroke-linejoin="round"/>
<polygon points="928.8,617.5 928.8,625.3 926.3,626.8 925.1,627.5 922.8,632.7 922.2,634.2 920.7,637.8 917.7,645.2 916.2,648.9 912.8,654.8 911.1,657.8 906.8,663.0 903.7,666.7 903.7,669.6 903.7,671.8 908.7,671.8 911.0,669.6 913.7,666.7 918.5,663.0 923.8,657.8 926.6,654.8 931.3,648.9 934.2,645.2 939.5,637.8 942.1,634.2 943.2,632.7 947.9,627.5 948.6,626.8 949.0,625.3 950.2,617.5" fill="#46337E" stroke="#46337E" stroke-width="2.5" stroke-linejoin="round"/>
<polygon points="928.8,617.5 928.8,625.3 926.3,626.8 925.1,627.5 922.8,632.7 922.2,634.2 920.7,637.8 917.7,645.2 916.2,648.9 912.8,654.8 911.1,657.8 906.8,663.0 903.7,666.7 903.7,669.6 903.7,671.8 907.9,671.8 909.7,669.6 911.8,666.7 916.1,663.0 920.9,657.8 923.4,654.8 927.5,648.9 929.9,645.2 934.3,637.8 936.4,634.2 937.3,632.7 941.0,627.5 941.8,626.8 942.8,625.3 943.4,617.5" fill="#365C8D" stroke="#365C8D" stroke-width="1.0" stroke-linejoin="round"/>
<polygon points="928.8,617.5 928.8,625.3 926.3,626.8 925.1,627.5 922.8,632.7 922.2,634.2 920.7,637.8 917.7,645.2 916.2,648.9 912.8,654.8 911.1,657.8 906.8,663.0 903.7,666.7 903.7,669.6 903.7,671.8 907.4,671.8 909.1,669.6 911.0,666.7 915.1,663.0 919.9,657.8 922.3,654.8 926.3,648.9 928.5,645.2 932.7,637.8 934.8,634.2 935.7,632.7 939.2,627.5 940.0,626.8 941.2,625.3 941.6,617.5" fill="#277F8E" stroke="#277F8E" stroke-width="1.0" stroke-linejoin="round"/>
<polygon points="928.8,617.5 928.8,625.3 926.3,626.8 925.1,627.5 922.8,632.7 922.2,634.2 920.7,637.8 917.7,645.2 916.2,648.9 912.8,654.8 911.1,657.8 906.8,663.0 903.7,666.7 903.7,669.6 903.7,671.8 907.0,671.8 908.4,669.6 909.8,666.7 913.5,663.0 917.8,657.8 919.8,654.8 923.2,648.9 925.0,645.2 928.2,637.8 929.7,634.2 930.4,632.7 932.9,627.5 933.9,626.8 935.5,625.3 935.2,617.5" fill="#1FA187" stroke="#1FA187" stroke-width="1.0" stroke-linejoin="round"/>
<polygon points="928.8,617.5 928.8,625.3 926.3,626.8 925.1,627.5 922.8,632.7 922.2,634.2 920.7,637.8 917.7,645.2 916.2,648.9 912.8,654.8 911.1,657.8 906.8,663.0 903.7,666.7 903.7,669.6 903.7,671.8 906.2,671.8 907.2,669.6 908.3,666.7 911.8,663.0 916.0,657.8 917.9,654.8 921.3,648.9 922.9,645.2 926.0,637.8 927.4,634.2 928.1,632.7 930.5,627.5 931.5,626.8 933.4,625.3 933.1,617.5" fill="#4AC16D" stroke="#4AC16D" stroke-width="1.0" stroke-linejoin="round"/>
<polygon points="928.8,617.5 928.8,625.3 926.3,626.8 925.1,627.5 922.8,632.7 922.2,634.2 920.7,637.8 917.7,645.2 916.2,648.9 912.8,654.8 911.1,657.8 906.8,663.0 903.7,666.7 903.7,669.6 903.7,671.8 904.9,671.8 905.4,669.6 906.0,666.7 909.3,663.0 913.6,657.8 915.4,654.8 918.7,648.9 920.3,645.2 923.4,637.8 924.8,634.2 925.5,632.7 927.8,627.5 928.9,626.8 931.1,625.3 930.9,617.5" fill="#9FDA3A" stroke="#9FDA3A" stroke-width="1.0" stroke-linejoin="round"/>
<polygon points="928.8,617.5 928.8,625.3 926.3,626.8 925.1,627.5 922.8,632.7 922.2,634.2 920.7,637.8 917.7,645.2 916.2,648.9 912.8,654.8 911.1,657.8 906.8,663.0 903.7,666.7 903.7,669.6 903.7,671.8 903.9,671.8 903.9,669.6 904.0,666.7 907.2,663.0 911.5,657.8 913.3,654.8 916.7,648.9 918.2,645.2 921.3,637.8 922.8,634.2 923.5,632.7 925.8,627.5 927.0,626.8 929.4,625.3 929.4,617.5" fill="#FDE725" stroke="#FDE725" stroke-width="1.0" stroke-linejoin="round"/>
<circle cx="948.7" cy="617.5" r="2.8" fill="#46337E"/>
<circle cx="948.7" cy="626.8" r="2.8" fill="#46337E"/>
<circle cx="944.3" cy="632.7" r="2.8" fill="#46337E"/>
<circle cx="941.3" cy="637.8" r="2.8" fill="#46337E"/>
<circle cx="936.9" cy="645.2" r="2.8" fill="#440154"/>
<circle cx="933.6" cy="650.0" r="2.8" fill="#440154"/>
<circle cx="930.3" cy="654.8" r="2.8" fill="#440154"/>
<circle cx="926.6" cy="658.9" r="2.8" fill="#440154"/>
<circle cx="922.9" cy="663.0" r="2.8" fill="#440154"/>
<circle cx="918.5" cy="666.3" r="2.8" fill="#440154"/>
<circle cx="914.0" cy="669.6" r="2.8" fill="#440154"/>
<circle cx="955.4" cy="626" r="3.6" fill="#440154"/>
<circle cx="960.6" cy="628.2" r="3.6" fill="#440154"/>
<circle cx="924" cy="637" r="3.6" fill="#4AC16D"/>
<circle cx="908" cy="668.5" r="3.6" fill="#9FDA3A"/>
<circle cx="915" cy="662" r="3.6" fill="#365C8D"/>
</g>
<clipPath id="cpJ"><rect x="739.2" y="709.6" width="72.7" height="55.0"/></clipPath><g clip-path="url(#cpJ)">
<polygon points="765.5,710.5 763.3,719.8 763.3,725.7 757.4,730.1 755.9,736.0 750.0,746.4 743.4,755.2 738.2,761.1 738.2,764.6 745.0,764.6 750.8,761.9 759.6,755.2 769.2,751.5 779.6,746.4 780.3,740.5 785.5,736.8 783.3,733.1 775.9,730.8 777.4,726.4 783.3,724.2 784.0,719.8 784.0,710.5" fill="#440154" stroke="#440154" stroke-width="2.5" stroke-linejoin="round"/>
<polygon points="765.5,710.5 763.3,719.8 763.3,724.2 763.3,725.7 762.4,726.4 757.4,730.1 757.2,730.8 756.6,733.1 755.9,736.0 755.4,736.8 753.3,740.5 750.0,746.4 746.2,751.5 743.4,755.2 738.2,761.1 738.2,761.9 738.2,764.6 741.6,764.6 744.8,761.9 745.5,761.1 752.9,755.2 760.5,751.5 769.8,746.4 772.8,740.5 778.2,736.8 778.2,736.0 777.7,733.1 772.4,730.8 772.7,730.1 775.2,726.4 777.0,725.7 780.8,724.2 782.2,719.8 784.0,710.5" fill="#46337E" stroke="#46337E" stroke-width="2.5" stroke-linejoin="round"/>
<polygon points="765.5,710.5 763.3,719.8 763.3,724.2 763.3,725.7 762.4,726.4 757.4,730.1 757.2,730.8 756.6,733.1 755.9,736.0 755.4,736.8 753.3,740.5 750.0,746.4 746.2,751.5 743.4,755.2 738.2,761.1 738.2,761.9 738.2,764.6 741.3,764.6 744.0,761.9 744.5,761.1 751.3,755.2 757.8,751.5 765.6,746.4 768.2,740.5 772.5,736.8 772.5,736.0 772.2,733.1 768.3,730.8 768.6,730.1 771.6,726.4 773.1,725.7 775.7,724.2 776.6,719.8 778.1,710.5" fill="#365C8D" stroke="#365C8D" stroke-width="1.0" stroke-linejoin="round"/>
<polygon points="765.5,710.5 763.3,719.8 763.3,724.2 763.3,725.7 762.4,726.4 757.4,730.1 757.2,730.8 756.6,733.1 755.9,736.0 755.4,736.8 753.3,740.5 750.0,746.4 746.2,751.5 743.4,755.2 738.2,761.1 738.2,761.9 738.2,764.6 740.9,764.6 743.4,761.9 743.8,761.1 750.4,755.2 756.5,751.5 763.8,746.4 766.5,740.5 770.6,736.8 770.6,736.0 770.4,733.1 767.0,730.8 767.3,730.1 770.5,726.4 772.0,725.7 774.3,724.2 775.0,719.8 776.6,710.5" fill="#277F8E" stroke="#277F8E" stroke-width="1.0" stroke-linejoin="round"/>
<polygon points="765.5,710.5 763.3,719.8 763.3,724.2 763.3,725.7 762.4,726.4 757.4,730.1 757.2,730.8 756.6,733.1 755.9,736.0 755.4,736.8 753.3,740.5 750.0,746.4 746.2,751.5 743.4,755.2 738.2,761.1 738.2,761.9 738.2,764.6 740.6,764.6 742.7,761.9 743.1,761.1 749.5,755.2 755.1,751.5 761.9,746.4 764.6,740.5 768.3,736.8 768.4,736.0 768.3,733.1 765.5,730.8 765.8,730.1 769.2,726.4 770.6,725.7 772.5,724.2 773.1,719.8 774.8,710.5" fill="#1FA187" stroke="#1FA187" stroke-width="1.0" stroke-linejoin="round"/>
<polygon points="765.5,710.5 763.3,719.8 763.3,724.2 763.3,725.7 762.4,726.4 757.4,730.1 757.2,730.8 756.6,733.1 755.9,736.0 755.4,736.8 753.3,740.5 750.0,746.4 746.2,751.5 743.4,755.2 738.2,761.1 738.2,761.9 738.2,764.6 740.2,764.6 741.9,761.9 742.2,761.1 748.0,755.2 752.5,751.5 757.9,746.4 760.2,740.5 762.9,736.8 763.1,736.0 763.1,733.1 761.7,730.8 761.8,730.1 765.8,726.4 766.9,725.7 767.8,724.2 767.8,719.8 769.2,710.5" fill="#4AC16D" stroke="#4AC16D" stroke-width="1.0" stroke-linejoin="round"/>
<polygon points="765.5,710.5 763.3,719.8 763.3,724.2 763.3,725.7 762.4,726.4 757.4,730.1 757.2,730.8 756.6,733.1 755.9,736.0 755.4,736.8 753.3,740.5 750.0,746.4 746.2,751.5 743.4,755.2 738.2,761.1 738.2,761.9 738.2,764.6 739.2,764.6 740.1,761.9 740.2,761.1 745.7,755.2 749.5,751.5 754.1,746.4 757.0,740.5 759.5,736.8 759.8,736.0 760.2,733.1 759.7,730.8 759.9,730.1 764.3,726.4 765.4,725.7 765.9,724.2 765.9,719.8 767.7,710.5" fill="#9FDA3A" stroke="#9FDA3A" stroke-width="1.0" stroke-linejoin="round"/>
<polygon points="765.5,710.5 763.3,719.8 763.3,724.2 763.3,725.7 762.4,726.4 757.4,730.1 757.2,730.8 756.6,733.1 755.9,736.0 755.4,736.8 753.3,740.5 750.0,746.4 746.2,751.5 743.4,755.2 738.2,761.1 738.2,761.9 738.2,764.6 738.3,764.6 738.5,761.9 738.5,761.1 743.8,755.2 746.9,751.5 751.0,746.4 754.4,740.5 756.7,736.8 757.1,736.0 757.8,733.1 758.1,730.8 758.3,730.1 763.1,726.4 764.1,725.7 764.3,724.2 764.4,719.8 766.6,710.5" fill="#FDE725" stroke="#FDE725" stroke-width="1.0" stroke-linejoin="round"/>
<circle cx="782.5" cy="710.5" r="2.8" fill="#46337E"/>
<circle cx="782.5" cy="719.8" r="2.8" fill="#46337E"/>
<circle cx="781.8" cy="724.2" r="2.8" fill="#46337E"/>
<circle cx="775.9" cy="726.4" r="2.8" fill="#46337E"/>
<circle cx="774.4" cy="730.8" r="2.8" fill="#46337E"/>
<circle cx="781.8" cy="733.1" r="2.8" fill="#46337E"/>
<circle cx="784.0" cy="736.8" r="2.8" fill="#440154"/>
<circle cx="778.8" cy="740.5" r="2.8" fill="#440154"/>
<circle cx="778.1" cy="746.4" r="2.8" fill="#440154"/>
<circle cx="772.9" cy="749.0" r="2.8" fill="#440154"/>
<circle cx="767.7" cy="751.5" r="2.8" fill="#440154"/>
<circle cx="762.9" cy="753.4" r="2.8" fill="#440154"/>
<circle cx="758.1" cy="755.2" r="2.8" fill="#440154"/>
<circle cx="753.7" cy="758.5" r="2.8" fill="#440154"/>
<circle cx="749.3" cy="761.9" r="2.8" fill="#440154"/>
<circle cx="787.7" cy="712.8" r="3.6" fill="#277F8E"/>
<circle cx="801.4" cy="713.1" r="3.6" fill="#440154"/>
<circle cx="808.7" cy="714.6" r="3.6" fill="#440154"/>
<circle cx="794.7" cy="722" r="3.6" fill="#440154"/>
<circle cx="783" cy="736" r="3.6" fill="#440154"/>
<circle cx="750" cy="757" r="3.6" fill="#365C8D"/>
<circle cx="743" cy="761" r="3.6" fill="#365C8D"/>
</g></g>
</svg>
<!-- PLOT SVG END -->
<svg id="ov" class="a" style="left:0;top:0" width="1217" height="839">
  <defs>
    <linearGradient id="sg" x1="0" y1="0" x2="0" y2="1"><stop offset="0" stop-color="#0b0f13" stop-opacity="0.2"/><stop offset="0.3" stop-color="#0b0f13"/><stop offset="0.7" stop-color="#0b0f13"/><stop offset="1" stop-color="#0b0f13" stop-opacity="0.2"/></linearGradient>
    <radialGradient id="yarn" cx="0.4" cy="0.35" r="0.7"><stop offset="0" stop-color="#5a8fe0"/><stop offset="1" stop-color="#1d3f8a"/></radialGradient>
    <radialGradient id="glass" cx="0.4" cy="0.35" r="0.7"><stop offset="0" stop-color="#ffffff"/><stop offset="1" stop-color="#9fc0dc"/></radialGradient>
  </defs>
  <!-- editor tab icon -->
  <path d="M29.5 103.5 H41 L45.5 108 V121.5 H29.5Z" fill="#f4f4f4"/>
  <path d="M41 103.5 V108 H45.5" fill="#d0d0d0"/>
  <circle cx="33.5" cy="111.5" r="6.3" fill="#b8345f"/>
  <text x="33.5" y="113.6" text-anchor="middle" font-family="Liberation Sans" font-size="5.2" font-weight="bold" fill="#fff" textLength="10" lengthAdjust="spacingAndGlyphs">Rmd</text>
  <!-- editor toolbar -->
  <path d="M27 142 L35 134.5 V139 H44.5 V145 H35 V149.5Z" fill="#d3d7db"/>
  <path d="M67 142 L59 134.5 V139 H49.5 V145 H59 V149.5Z" fill="#7a8590"/>
  <rect x="75" y="133" width="2" height="18" fill="url(#sg)"/>
  <rect x="93" y="135" width="12.5" height="13" rx="1.5" fill="#dfe2e5"/>
  <rect x="93" y="135" width="12.5" height="3.5" rx="1.5" fill="#b9d0e4"/>
  <path d="M88 147 L95 140" stroke="#c9ced3" stroke-width="2"/>
  <path d="M91.5 139 H96 V143.5Z" fill="#c9ced3"/>
  <rect x="114" y="133" width="2" height="18" fill="url(#sg)"/>
  <rect x="128" y="134.5" width="15" height="15" rx="1.5" fill="#5c7083"/>
  <rect x="130" y="135.5" width="11" height="5.5" fill="#7d8891"/>
  <rect x="131" y="143.5" width="9" height="6" fill="#7d8891"/>
  <rect x="133" y="144.5" width="2" height="5" fill="#5c7083"/>
  <rect x="153" y="133" width="2" height="18" fill="url(#sg)"/>
  <text x="164" y="139.5" font-family="Liberation Serif" font-weight="bold" font-size="9" fill="#8d969e">ABC</text>
  <path d="M171 145.5 L174.5 149.5 L181 141" stroke="#1e9a2e" stroke-width="1.8" fill="none"/>
  <path d="M208 145 L213.5 150" stroke="#a5662e" stroke-width="3" stroke-linecap="round"/>
  <circle cx="204.5" cy="140.8" r="5.8" fill="url(#glass)" stroke="#8aa3b8" stroke-width="0.8"/>
  <rect x="222" y="133" width="2" height="18" fill="url(#sg)"/>
  <circle cx="245" cy="143.5" r="7" fill="url(#yarn)"/>
  <path d="M239 141 Q245 139 251 142 M239 145 Q245 143 251 146 M241 149 Q246 147 250 149" stroke="#7aa8ee" stroke-width="0.8" fill="none"/>
  <path d="M249 140 L255.5 132" stroke="#e8e8e8" stroke-width="1.5"/>
  <path d="M233 150 Q236 146 238 148 Q236 151 240 150" stroke="#2f4fa8" stroke-width="1" fill="none"/>
  <path d="M302.5 140.5 h7 l-3.5 3.5z" fill="#dfe3e6"/>
  <g transform="translate(331.5,141)" fill="#dfe3e6">
    <circle r="5.6"/>
    <rect x="-1.7" y="-8" width="3.4" height="16"/>
    <rect x="-1.7" y="-8" width="3.4" height="16" transform="rotate(45)"/>
    <rect x="-1.7" y="-8" width="3.4" height="16" transform="rotate(90)"/>
    <rect x="-1.7" y="-8" width="3.4" height="16" transform="rotate(135)"/>
    <circle r="2.3" fill="#4e5c69"/>
  </g>
  <path d="M350.5 140.5 h7 l-3.5 3.5z" fill="#dfe3e6"/>
  <rect x="371" y="134" width="14" height="15.5" rx="2" fill="#5ea75e"/>
  <text x="374" y="147" font-family="Liberation Sans" font-size="11" fill="#f0f0f0">C</text>
  <circle cx="368" cy="136.5" r="5" fill="#f2f2f2"/>
  <path d="M368 133 V140 M364.5 136.5 H371.5" stroke="#1e9a2e" stroke-width="2.2"/>
  <path d="M438.5 140.5 h7 l-3.5 3.5z" fill="#dfe3e6"/>
  <rect x="454" y="133" width="2" height="18" fill="url(#sg)"/>
  <path d="M477 134 L484 141.5 H480 V149.5 H474 V141.5 H470Z" fill="#e3e6e9"/>
  <path d="M506.5 149.5 L513.5 142 H509.5 V134 H503.5 V142 H499.5Z" fill="#e3e6e9"/>
  <rect x="523" y="133" width="2" height="18" fill="url(#sg)"/>
  <rect x="535" y="133.5" width="13.5" height="14.5" rx="2" fill="#e0e3e6"/>
  <rect x="537" y="139" width="8" height="4" fill="#8fb0de"/>
  <path d="M545 139 H552 V135.5 L558.5 141 L552 146 V142.5 H545Z" fill="#1d9a50"/>
  <path d="M597 140.5 h7 l-3.5 3.5z" fill="#dfe3e6"/>
  <rect x="612" y="133" width="2" height="18" fill="url(#sg)"/>
  <path d="M624.5 140.5 H627.5 Q629.5 135 634.5 134.5 Q638.5 134.5 639.5 136.5" stroke="#1b8fd6" stroke-width="2.5" fill="none"/>
  <path d="M644 142.5 H641 Q639 148 634 148.3 Q630 148.3 629 146.3" stroke="#1b8fd6" stroke-width="2.5" fill="none"/>
  <circle cx="634" cy="141.4" r="3.3" fill="#1b8fd6"/>
  <rect x="643" y="128" width="9" height="27" fill="#324b62"/><rect x="643" y="128" width="1" height="27" fill="#0d1a27"/>
  <!-- status bar -->
  <rect x="93" y="435" width="14" height="13" rx="1.5" fill="#39b53a"/>
  <text x="96" y="446" font-family="Liberation Sans" font-style="italic" font-size="11" fill="#f4f4f4">C</text>
  <path d="M228 441 L231 437 L234 441Z M228 443 L231 447 L234 443Z" fill="#8e969d"/>
  <path d="M628 441 L631 437 L634 441Z M628 443 L631 447 L634 443Z" fill="#8e969d"/>
<!-- pane min/max -->
  <path d="M591 123 V117 Q591 115 593 115 H607 Q609 115 609 117 V123 Z M592.2 121.8 H607.8 V118.4 H592.2 Z" fill="#8e979f" fill-rule="evenodd"/>
  <path d="M614 123 V110 Q614 107.8 616.2 107.8 H628.8 Q631 107.8 631 110 V123 Z M615.2 121.8 H629.8 V112 H615.2 Z" fill="#8e979f" fill-rule="evenodd"/>
  <path d="M591 487 V481 Q591 479 593 479 H607 Q609 479 609 481 V487 Z M592.2 485.8 H607.8 V482.4 H592.2 Z" fill="#8e979f" fill-rule="evenodd"/>
  <path d="M614 487 V474 Q614 471.8 616.2 471.8 H628.8 Q631 471.8 631 474 V487 Z M615.2 485.8 H629.8 V476 H615.2 Z" fill="#8e979f" fill-rule="evenodd"/>
  <path d="M1145.5 123 V117 Q1145.5 115 1147.5 115 H1161.5 Q1163.5 115 1163.5 117 V123 Z M1146.7 121.8 H1162.3 V118.4 H1146.7 Z" fill="#8e979f" fill-rule="evenodd"/>
  <path d="M1168 123 V110 Q1168 107.8 1170.2 107.8 H1182.8 Q1185 107.8 1185 110 V123 Z M1169.2 121.8 H1183.8 V112 H1169.2 Z" fill="#8e979f" fill-rule="evenodd"/>
  <path d="M1145.5 394 V388 Q1145.5 386 1147.5 386 H1161.5 Q1163.5 386 1163.5 388 V394 Z M1146.7 392.8 H1162.3 V389.4 H1146.7 Z" fill="#8e979f" fill-rule="evenodd"/>
  <path d="M1168 394 V381 Q1168 378.8 1170.2 378.8 H1182.8 Q1185 378.8 1185 381 V394 Z M1169.2 392.8 H1183.8 V383 H1169.2 Z" fill="#8e979f" fill-rule="evenodd"/>
  <!-- console path arrow -->
  <path d="M272 509 Q273 501 280.5 500.5 V497.5 L286.5 503 L280.5 508.5 V505 Q275 505 272 509Z" fill="#cfd4d9"/>
  <!-- console brush -->
  <path d="M635 495 L624 506" stroke="#8e979f" stroke-width="1.6" stroke-linecap="round"/>
  <path d="M626 503 L622 507 Q618 511 613 511 Q614 513 618 513 Q623 513 627 510 L629 505Z" fill="#8e979f"/>
<!-- close x -->
<path d="M137.5 110.3 L144.60000000000002 117.39999999999999 M144.60000000000002 110.3 L137.5 117.39999999999999" stroke="#7d878f" stroke-width="1.7"/>
<path d="M171.0 472.7 L178.10000000000002 479.8 M178.10000000000002 472.7 L171.0 479.8" stroke="#7d878f" stroke-width="1.7"/>
<path d="M296.2 472.7 L303.3 479.8 M303.3 472.7 L296.2 479.8" stroke="#7d878f" stroke-width="1.7"/>
<path d="M365.3 472.7 L372.40000000000003 479.8 M372.40000000000003 472.7 L365.3 479.8" stroke="#7d878f" stroke-width="1.7"/>
<!-- env icons -->
  <g transform="translate(559,125)">
    <path d="M103 14.5 L105.5 12.3 L109.5 11.3 L111 10.3 L118.5 10.3 L119.7 24.7 L106 24.7 Z" fill="#c9a44a" stroke="#b08d35" stroke-width="0.6"/>
    <path d="M105.6 12.9 L117.3 10.8 L119.3 22.5 L106.2 22.7 Z" fill="#ededed"/>
    <path d="M102.3 16.7 L115.2 16.7 L119.8 24.7 L106.3 24.7 Z" fill="#e4c96f" stroke="#b8962e" stroke-width="0.8"/>
    <path d="M113.5 16 Q116 12.6 122.3 12.9" stroke="#22a180" stroke-width="2.4" fill="none"/>
    <path d="M121.8 9.2 L127 13.4 L122.1 17.5 Z" fill="#22a180"/>
  </g>
  <rect x="695" y="134.5" width="15.5" height="15.5" rx="1.5" fill="#6fa3d9"/>
  <rect x="697" y="135.5" width="11.5" height="6" fill="#eef2f6"/>
  <rect x="698" y="144" width="9.5" height="6" fill="#eef2f6"/>
  <rect x="700" y="145" width="2.2" height="5" fill="#6fa3d9"/>
  <rect x="720" y="133" width="2" height="18" fill="url(#sg)"/>
  <rect x="731.5" y="134.5" width="16" height="14.5" rx="1" fill="#d8dcdf"/>
  <path d="M731.5 139 H747.5 M731.5 144 H747.5 M737 134.5 V149 M742.5 134.5 V149" stroke="#9aa3aa" stroke-width="0.9"/>
  <path d="M740 146 Q742 139 749 138.5" stroke="#1e9e78" stroke-width="2.4" fill="none"/>
  <path d="M748 134.5 L754.5 138.5 L748 142.5Z" fill="#1e9e78"/>
  <path d="M869.5 140.5 h7 l-3.5 3.5z" fill="#dfe3e6"/>
  <rect x="886" y="133" width="2" height="18" fill="url(#sg)"/>
<g id="broom">
  <ellipse cx="909" cy="148.8" rx="5" ry="1.4" fill="#2a333b" opacity="0.5"/>
  <path d="M915 131.5 L910 136.5" stroke="#c8584a" stroke-width="2.6" stroke-linecap="round"/>
  <path d="M910.9 137.2 Q911.5 141 908.4 145.5 L902.7 150.2 Q899 147 896.3 142.3 L901.5 139.5 Q904 136 906 135.8 Q909 135.5 910.9 137.2Z" fill="#d9c47c"/>
  <path d="M905.2 136.7 L910.4 141.8 M903.3 138.9 L908.4 144" stroke="#94682a" stroke-width="1.1"/>
</g>
  <rect x="1074" y="136" width="15" height="12.5" fill="#dfe3e6"/>
  <path d="M1074 140.2 H1089 M1074 144.4 H1089 M1079 136 V148.5 M1084 136 V148.5" stroke="#7d8a96" stroke-width="0.9"/>
  <path d="M1133.5 140.5 h7 l-3.5 3.5z" fill="#dfe3e6"/>
  <rect x="1150" y="133" width="2" height="18" fill="url(#sg)"/>
<g id="refresh">
  <path d="M1173.7 135.6 A6.25 6.25 0 1 0 1175.2 142.1" stroke="#c3c9d0" stroke-width="4.2" fill="none"/>
  <path d="M1178 131.2 L1178 139 L1170.1 139Z" fill="#c3c9d0"/>
</g>
  <path d="M1184.5 140.5 h7 l-3.5 3.5z" fill="#dfe3e6"/>
  <circle cx="1048.5" cy="169" r="4.5" stroke="#a2acb5" stroke-width="2.2" fill="none"/>
  <path d="M1052 172.5 L1057.5 178" stroke="#a2acb5" stroke-width="2.8" stroke-linecap="round"/>
  <rect x="668" y="160" width="12" height="12" rx="2.2" fill="#a85db8"/>
  <rect x="670.5" y="166" width="12" height="12" rx="2.2" fill="#5c8fd6"/>
  <rect x="663" y="164" width="12" height="12" rx="2.2" fill="#9fb278"/>
  <path d="M833.5 168.5 h7 l-3.5 3.5z" fill="#dfe3e6"/>
  <rect x="660" y="186" width="14.5" height="15" rx="3" fill="#d5dade"/>
  <path d="M770 199.2 L776 190.6 L782 199.2Z" fill="#8e99a4"/>
  <rect x="660" y="215" width="14.5" height="14" rx="3" fill="#d5dade"/>
  <rect x="660" y="239" width="14.5" height="14" rx="3" fill="#d5dade"/>
  <rect x="1159" y="237.5" width="18" height="15" rx="2" fill="#f2f5f8"/>
  <path d="M1159 242 H1177 M1159 247 H1177 M1165 240 V252.5 M1171 240 V252.5" stroke="#a9c4de" stroke-width="0.8"/>
<!-- plots toolbar icons -->
  <path d="M663.5 412.8 L671 405.9 V410 H680.6 V415.6 H671 V419.7Z" fill="#6b7b89"/>
  <path d="M712.8 412.8 L705.3 405.9 V410 H695.8 V415.6 H705.3 V419.7Z" fill="#6b7b89"/>
  <rect x="720.5" y="403" width="2" height="18" fill="url(#sg)"/>
  <path d="M733 421 L740 413" stroke="#a0652c" stroke-width="2.6" stroke-linecap="round"/>
  <circle cx="744.4" cy="408.4" r="5.8" fill="url(#glass)" stroke="#8aa3b8" stroke-width="0.8"/>
  <path d="M744.4 404.6 V412.2 M740.6 408.4 H748.2" stroke="#17a589" stroke-width="2.3"/>
  <rect x="809" y="403" width="2" height="18" fill="url(#sg)"/>
  <rect x="823.5" y="404.2" width="16.2" height="15" fill="#f2f2f2"/>
  <rect x="825" y="405.7" width="13.2" height="6" fill="#5fa4e0"/>
  <rect x="825" y="411.7" width="13.2" height="6" fill="#e7c13a"/>
  <path d="M818.5 409.6 H825 V406.6 L830.8 411.6 L825 416.6 V413.6 H818.5Z" fill="#f6f6f6" stroke="#2a2a2a" stroke-width="0.8"/>
  <path d="M898.5 411.5 h7 l-3.5 3.5z" fill="#dfe3e6"/>
  <rect x="916" y="403" width="2" height="18" fill="url(#sg)"/>
  <rect x="931.5" y="405" width="14.5" height="15.6" fill="#e9e9e9"/>
  <circle cx="931.5" cy="409.7" r="5.6" fill="#b52a2a"/>
  <path d="M929 407.2 L934 412.2 M934 407.2 L929 412.2" stroke="#fff" stroke-width="1.8"/>
  <rect x="954" y="403" width="2" height="18" fill="url(#sg)"/>
<use href="#broom" transform="translate(68,270.5)"/>
  <path d="M1119 411 H1122 Q1124 406 1129 405.5 Q1133 405.5 1134 407.5" stroke="#1b8fd6" stroke-width="2.5" fill="none"/>
  <path d="M1138.5 413.5 H1135.5 Q1133.5 419 1128.5 419.3 Q1124.5 419.3 1123.5 417.3" stroke="#1b8fd6" stroke-width="2.5" fill="none"/>
  <circle cx="1128.5" cy="412.4" r="3.3" fill="#1b8fd6"/>
  <path d="M1145.5 411 h7 l-3.5 3.5z" fill="#dfe3e6"/>
  <rect x="1162" y="403" width="2" height="18" fill="url(#sg)"/>
<use href="#refresh" transform="translate(12,271)"/>
  <circle cx="635.5" cy="254.4" r="3.6" fill="#5b6670"/>
  <rect x="625" y="155" width="1" height="276" fill="#3a3f44"/>
  <rect x="642" y="101" width="1" height="351" fill="#30475d"/>
  <rect x="642" y="465" width="1" height="355" fill="#30475d"/>
  <rect x="653" y="101" width="1" height="257" fill="#30475d"/>
  <rect x="653" y="372" width="1" height="448" fill="#30475d"/>
  <rect x="428.5" y="155" width="2" height="5" fill="#6a9a2a"/>
  <rect x="539" y="155" width="7" height="3" fill="#e0e0e0"/>
  <rect x="566" y="155" width="9" height="2.5" fill="#2bb24c"/>
  <rect x="594" y="155" width="2" height="3" fill="#2bb24c"/>
  <!-- fold marker -->
  <path d="M73 423 L77 418 L81 423Z" fill="#8f8f8f"/>
</svg>
</body></html>
